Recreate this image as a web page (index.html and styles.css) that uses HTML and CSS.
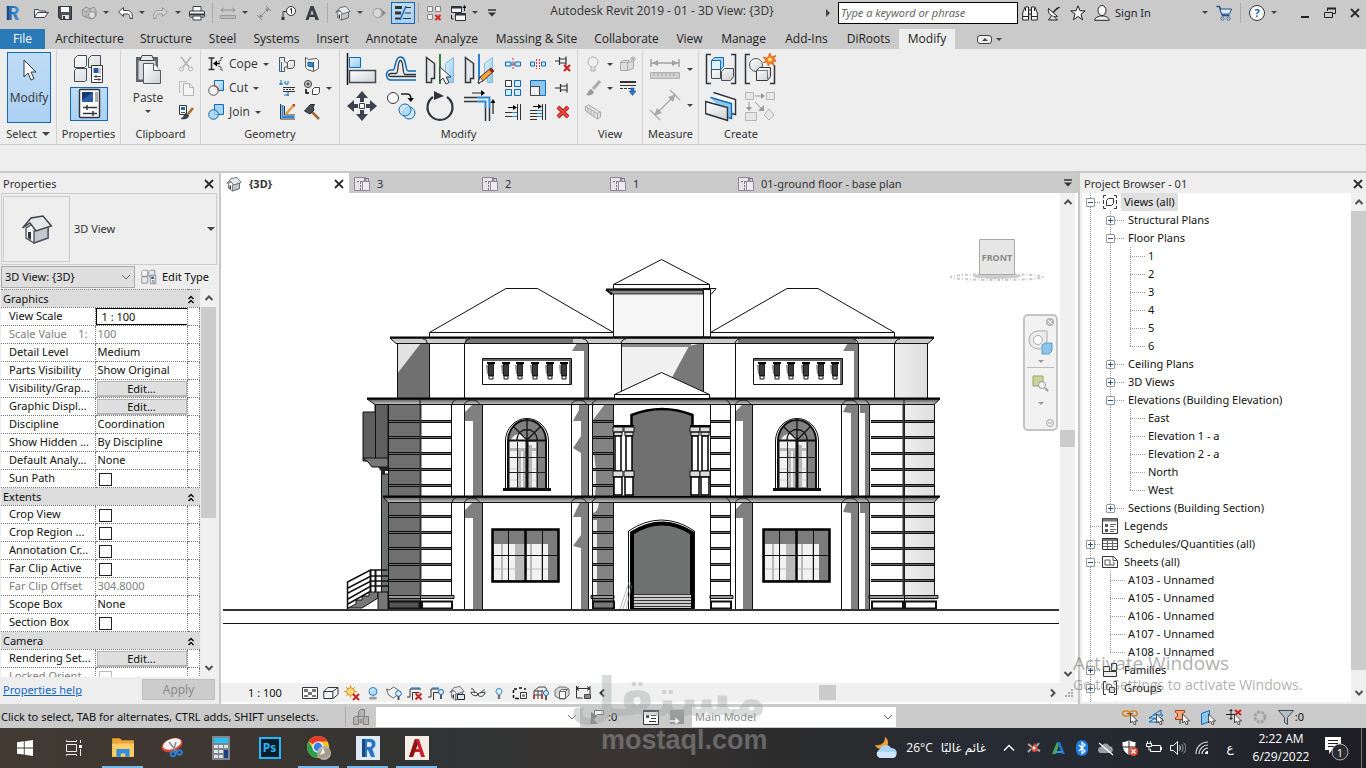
FILE: index.html
```html
<!DOCTYPE html>
<html lang="en">
<head>
    <meta charset="UTF-8">
    <meta name="viewport" content="width=device-width, initial-scale=1.0">
    <title>Autodesk Revit 2019 - 01 - 3D View: {3D}</title>
    <link rel="stylesheet" href="styles.css">
</head>
<body>
    <!-- Icon sprite -->
    <svg class="sprite" aria-hidden="true">
        <defs>
            <linearGradient id="g-r" x1="0" x2="1"><stop offset="0" stop-color="#1a5fa8"/><stop offset="1" stop-color="#4d9bdc"/></linearGradient>
            <linearGradient id="g-sky" x1="0" x2="1" y1="0" y2="1"><stop offset="0" stop-color="#e6f4fc"/><stop offset="1" stop-color="#8cc8ee"/></linearGradient>
            <linearGradient id="g-grey" x1="0" x2="1" y1="0" y2="1"><stop offset="0" stop-color="#fff"/><stop offset="1" stop-color="#cdd0d4"/></linearGradient>
        </defs>

        <!-- title bar -->
        <symbol id="i-revit" viewBox="0 0 16 18"><path d="M1 1h3v16H1z" fill="#174a86"/><path d="M4 1h5c4 0 5.500 2 5.500 4.500 0 2-1 3.500-3 4.200L15 17h-4L8 10.500H6.500V17H4zM6.500 3.500v4.500H9c1.500 0 2.200-1 2.200-2.300S10.500 3.500 9 3.500z" fill="url(#g-r)" fill-rule="evenodd"/></symbol>
        <symbol id="i-open" viewBox="0 0 16 16"><path d="M1.500 12.500v-8h4l1 1.500h6v2" fill="#fff" stroke="#3d434c"/><path d="M1.500 12.500l3-5h11l-4 5z" fill="#f4f4f4" stroke="#3d434c"/></symbol>
        <symbol id="i-save" viewBox="0 0 16 16"><path d="M1.500 1.500h13v13h-11l-2-2z" fill="#4b5058" stroke="#30353d"/><path d="M4 2h8v5H4z" fill="#fff"/><path d="M5 10h7v4H5z" fill="#e2e2e2"/><path d="M6 11h2v3H6z" fill="#333"/></symbol>
        <symbol id="i-sync" viewBox="0 0 16 16"><path d="M1 5l4-3 4 2 4-2 2 3v6l-4 3-4-1-5-2z" fill="#c4c4c4" stroke="#8f8f8f"/><path d="M1 5l4 2v5M5 7l4-3v5l-4 3" fill="none" stroke="#999"/><circle cx="11" cy="10" r="3.500" fill="#ddd" stroke="#8a8a8a"/></symbol>
        <symbol id="i-undo" viewBox="0 0 16 16"><path d="M6.500 2.500l-5 4.500 5 4.500V9h4c2 0 2.500 2 2.500 4.500h2.500C15.500 8 14 5.500 10.500 5.500h-4z" fill="#fff" stroke="#3d434c"/></symbol>
        <symbol id="i-redo" viewBox="0 0 16 16"><path d="M9.500 2.500l5 4.500-5 4.500V9h-4c-2 0-2.500 2-2.500 4.500H.5C.5 8 2 5.500 5.500 5.500h4z" fill="#d4d4d4" stroke="#999"/></symbol>
        <symbol id="i-print" viewBox="0 0 16 16"><path d="M4 6V1.500h8V6" fill="#fff" stroke="#3d434c"/><rect x=".5" y="6" width="15" height="6" rx="1" fill="#f4f4f4" stroke="#30353d"/><path d="M1 9.500h14" stroke="#30353d" stroke-width="2"/><path d="M4 11h8v4H4z" fill="#fff" stroke="#3d434c"/></symbol>
        <symbol id="i-ruler" viewBox="0 0 16 16"><path d="M1 5h14M3.500 3L1 5l2.500 2M12.500 3L15 5l-2.500 2" fill="none" stroke="#8c8c8c"/><path d="M.5 10.500h15v3H.5z" fill="#bbb" stroke="#999"/></symbol>
        <symbol id="i-dim" viewBox="0 0 16 16"><path d="M3 13L13 3M1 10l5 5M10 1l5 5" fill="none" stroke="#8c8c8c"/><path d="M3 13l1-4 3 3zM13 3l-4 1 3 3z" fill="#8c8c8c"/></symbol>
        <symbol id="i-tag" viewBox="0 0 16 16"><circle cx="11" cy="6" r="4.500" fill="#fff" stroke="#30353d"/><path d="M11.500 3.500v5M10 4.500l1.500-1" stroke="#222"/><path d="M6.500 6.500H3v6" fill="none" stroke="#30353d"/><path d="M1.500 12h3v3h-3z" fill="#30353d"/></symbol>
        <symbol id="i-text" viewBox="0 0 16 16"><path d="M6.500 1h3L15 15h-3.500l-1-3h-5l-1 3H1.500zM8 5l-1.700 4.500h3.400z" fill="#3a3f47" fill-rule="evenodd"/></symbol>
        <symbol id="i-home" viewBox="0 0 16 16"><path d="M2.500 7.500v5l4 2.500 7-2.500v-6L10 3z" fill="#fafafa" stroke="#50565f" stroke-width=".7"/><path d="M6.500 15V9l7-3v6.500z" fill="#c3c8cc" stroke="#50565f" stroke-width=".7"/><path d="M.8 7.500L5 2.500l6-1 4.200 5-7.700 2.500L4.500 5z" fill="#e6e7e9" stroke="#3d434c" stroke-width=".7"/><path d="M3.500 9.500h1.500v4l-1.500-1z" fill="#333"/></symbol>
        <symbol id="i-section" viewBox="0 0 16 16"><path d="M9 3l6 5-6 5z" fill="#8a8a8a"/><circle cx="6.500" cy="8" r="4.500" fill="#d8d8d8" stroke="#999"/></symbol>
        <symbol id="i-thin" viewBox="0 0 16 16"><path d="M0 2.500h7M0 8h6" stroke="#333" stroke-width="3"/><path d="M0 13.500h5" stroke="#333" stroke-width="2"/><path d="M5 15L11 1" stroke="#1567b5" stroke-width="1.500"/><path d="M11 2.500h5M10 8h6M8 13.500h8" stroke="#333"/></symbol>
        <symbol id="i-closewin" viewBox="0 0 16 16"><path d="M1.500 1.500h5v5h-5zM9.500 1.500h5v5h-5zM1.500 9.500h5v5h-5z" fill="#eee" stroke="#888"/><path d="M9.500 10l5 5m0-5l-5 5" stroke="#d22" stroke-width="2"/></symbol>
        <symbol id="i-switch" viewBox="0 0 16 16"><path d="M1.500 1.500h10v6h-10zM5.500 8.500h10v7h-10z" fill="#f4f4f4" stroke="#30353d"/><path d="M1 2.500h11M5 9.500h11" stroke="#30353d" stroke-width="2"/><path d="M14.500 2v4M1.500 10v4h2" fill="none" stroke="#222"/><path d="M14.500 0l2 3h-4z"/></symbol>
        <symbol id="i-custom" viewBox="0 0 12 8"><path d="M2 1h8" stroke="#333" stroke-width="1.500"/><path d="M2 3.500h8l-4 4z" fill="#333"/></symbol>
        <symbol id="i-binoc" viewBox="0 0 16 16"><path d="M.7 15V8L3 2h3.500v13zM15.300 15V8L13 2H9.500v13z" fill="#fff" stroke="#222"/><path d="M6.500 5h3v4h-3z" fill="#ddd" stroke="#222"/><path d="M1 11.500h5.500M9.500 11.500H15M3.500 3v3M12.500 3v3" stroke="#222"/></symbol>
        <symbol id="i-dish" viewBox="0 0 16 16"><path d="M2.500 3.500c-1 5 3 9 9 8z" fill="#fff" stroke="#222"/><path d="M7 7.500l4.500-4.500M9.500 5l4-3" fill="none" stroke="#222" stroke-width="1.500"/><path d="M5.500 11l-3 4h9l-3-3" fill="#ddd" stroke="#222"/></symbol>
        <symbol id="i-star" viewBox="0 0 16 16"><path d="M8 .8l2 5h5.200L11 9.200l1.600 5.600L8 11.500l-4.600 3.300L5 9.200.8 5.800H6z" fill="#f6f6f6" stroke="#222"/></symbol>
        <symbol id="i-user" viewBox="0 0 16 16"><ellipse cx="8" cy="5.500" rx="4" ry="5" fill="#fff" stroke="#222"/><path d="M.7 15.300c0-3 3-3.300 5.300-4.300h4c2.300 1 5.300 1.300 5.300 4.300z" fill="#eee" stroke="#222"/></symbol>
        <symbol id="i-cart" viewBox="0 0 16 16"><path d="M.5 1.500h3l3 9h7" fill="none" stroke="#1f4f85" stroke-width="1.500"/><path d="M4 4h11.500l-2 5H5.500z" fill="#dde9f5" stroke="#1f4f85"/><circle cx="6.500" cy="13.500" r="1.500" fill="#fff" stroke="#1f4f85"/><circle cx="12.500" cy="13.500" r="1.500" fill="#fff" stroke="#1f4f85"/></symbol>
        <symbol id="i-min" viewBox="0 0 12 12"><path d="M2 10h8" stroke="#222" stroke-width="2"/></symbol>
        <symbol id="i-restore" viewBox="0 0 12 12"><path d="M3.500 4V1.500h8v5H9" fill="none" stroke="#222"/><path d="M3 1.500h9" stroke="#222" stroke-width="2"/><path d="M.5 5.500h8v5h-8z" fill="none" stroke="#222"/></symbol>
        <symbol id="i-x" viewBox="0 0 12 12"><path d="M2 2l8 8m0-8l-8 8" stroke="#2b2b2b" stroke-width="1.800"/></symbol>

        <!-- ribbon, large -->
        <symbol id="b-cursor" viewBox="0 0 16 24"><path d="M3 2v17l4-4 3 7 3-1.500-3-6.500h5z" fill="#fff" stroke="#30353d"/></symbol>
        <symbol id="b-types" viewBox="0 0 32 32"><path d="M1.500 5.500l3-3h9v10l-2 2h-10zM15.500 5.500l3-3h9v10l-2 2h-10zM1.500 17.500l2-2h10v12l-2 1h-10z" fill="url(#g-grey)" stroke="#444b55"/><path d="M18.500 12.500h11v17h-11z" fill="#fff" stroke="#30353d"/><path d="M20.500 15h5v5h-5z" fill="#2457a4"/><path d="M27 15v6" stroke="#888"/><path d="M21 23.500h7M21 26.500h7M23 22v3M26 25v3" stroke="#444"/></symbol>
        <symbol id="b-props" viewBox="0 0 32 32"><rect x="6.500" y="1.500" width="20" height="28" rx="1" fill="#fff" stroke="#30353d" stroke-width="1.500"/><path d="M9 4h11v10H9z" fill="#2c5ea8"/><path d="M9 4h11l-11 8z" fill="#16386f"/><path d="M22 4h3v10h-3z" fill="#a9adb3"/><path d="M10 19.500h14M10 25.500h14M14 17v5M20 23v5" stroke="#30353d" stroke-width="1.500"/></symbol>
        <symbol id="b-paste" viewBox="0 0 32 32"><path d="M4 3h22v25H4z" fill="#5d646d"/><path d="M6.500 6.500h17v19h-17z" fill="#d8dade"/><path d="M10 1.500h10l2 5H8z" fill="#e8e8e8" stroke="#444"/><path d="M11.500 9.500h10l7 7v13h-17z" fill="url(#g-grey)" stroke="#555b63"/><path d="M21.500 9.500v7h7" fill="#fff" stroke="#555b63"/></symbol>
        <symbol id="b-align" viewBox="0 0 32 32"><path d="M1.500 0v32" stroke="#111" stroke-width="1.500"/><path d="M3.500 4.500h11v10h-11z" fill="url(#g-sky)" stroke="#0d69ba"/><path d="M3.500 17.500h26v12h-26z" fill="url(#g-grey)" stroke="#444b55" stroke-width="1.500"/></symbol>
        <symbol id="b-offset" viewBox="0 0 32 32"><path d="M31 27H6c-6 0-6-10 0-10h2c3 0 1-13 7.500-13s4.500 14 7.500 14h8" fill="none" stroke="#0d69ba" stroke-width="1.500"/><path d="M31 23.500H6c-3 0-3-3 0-3h5c3 0 1-13 4.500-13s1.500 14 4.500 14h11" fill="none" stroke="#30353d" stroke-width="1.300"/></symbol>
        <symbol id="b-mirror" viewBox="0 0 32 32"><path d="M2.500 4.500l8 6v15h-3v4h-5z" fill="#e4e6e9" stroke="#30353d" stroke-width="1.500"/><path d="M29.500 4.500l-8 6v15h3v4h5z" fill="url(#g-sky)" stroke="#7fbbe3"/></symbol>
        <symbol id="b-mirror-pick" viewBox="0 0 32 32"><use href="#b-mirror"/><path d="M16 1v30" stroke="#36803a" stroke-width="2"/><path d="M16 14v14l3-3 3 6 3-1.500-3-5.500h5z" fill="#fff" stroke="#30353d"/></symbol>
        <symbol id="b-mirror-draw" viewBox="0 0 32 32"><use href="#b-mirror"/><path d="M16 1v30" stroke="#2680d8" stroke-width="2"/><path d="M15 30l2-6L28 15l3 3-11 10z" fill="#f5a544" stroke="#5a2c12"/><path d="M28 15l3 3-2 2-3-3z" fill="#a61e1e"/><path d="M15 30l2-6 3 4z" fill="#fff" stroke="#444"/></symbol>
        <symbol id="b-move" viewBox="0 0 32 32"><path d="M16 1l6 7h-4v4h-4V8h-4zM16 31l-6-7h4v-4h4v4h4zM1 16l7-6v4h4v4H8v4zM31 16l-7 6v-4h-4v-4h4v-4z" fill="#3b424d"/><path d="M13.500 13.500h5v5h-5z" fill="#fff" stroke="#3b424d"/></symbol>
        <symbol id="b-copy" viewBox="0 0 32 32"><circle cx="8" cy="8" r="5.500" fill="#fff" stroke="#30353d"/><path d="M16 4h6q4 0 4 5" fill="none" stroke="#222" stroke-width="1.500"/><path d="M22.500 8h6.500l-3.200 4z"/><circle cx="24" cy="23" r="6" fill="#d5ebf8" stroke="#0d69ba"/><circle cx="20" cy="20" r="6" fill="url(#g-sky)" fill-opacity=".8" stroke="#0d69ba"/></symbol>
        <symbol id="b-rotate" viewBox="0 0 32 32"><path d="M9 7a12.500 12.500 0 1 0 14 0" fill="none" stroke="#30353d" stroke-width="2.200"/><path d="M10 1l10 5-10 4z" fill="#30353d"/></symbol>
        <symbol id="b-trim" viewBox="0 0 32 32"><path d="M1 7.500h13M1 11.500h13M22.500 18v13M26.500 18v13" stroke="#30353d" stroke-width="1.500"/><path d="M14 7.500h12.500V18M14 11.500h8.500V18" fill="none" stroke="#2b8ad8" stroke-width="2"/><path d="M9 3h10M30 24V12" stroke="#222" stroke-width="1.200"/><path d="M18 0l4 3-4 3zM27.500 13l2.500-4 2.500 4z"/></symbol>
        <symbol id="b-measure" viewBox="0 0 32 32"><path d="M2 10h28M2 6v8M30 6v8" stroke="#a2a2a2" stroke-width="1.500"/><path d="M3 10l6-3v6zM29 10l-6-3v6z" fill="#a2a2a2"/><path d="M1.500 19.500h29v6h-29z" fill="#cfcfcf" stroke="#b0b0b0"/><path d="M5 20v3M9 20v3M13 20v3M17 20v3M21 20v3M25 20v3" stroke="#aaa"/></symbol>
        <symbol id="b-dim" viewBox="0 0 32 32"><path d="M6 26L26 6M1 21l10 10M21 1l10 10" stroke="#a8a8a8" stroke-width="1.200"/><path d="M5 27l3-8 5 5zM27 5l-8 3 5 5z" fill="#a8a8a8"/></symbol>
        <symbol id="b-group" viewBox="0 0 32 32"><path d="M6 1.500H1.500v29H6M26 1.500h4.500v29H26" fill="none" stroke="#30353d" stroke-width="1.500"/><path d="M6.500 7.500l3-3h9v9l-3 3h-9z" fill="#a6d3f0" stroke="#0d69ba"/><path d="M6.500 7.500h9v9h-9z" fill="#e3f2fb" stroke="#0d69ba"/><path d="M6.500 16.500h9v9h-9zM16.500 18.500l3-3h9v8l-3 4h-9z" fill="url(#g-grey)" stroke="#444b55"/></symbol>
        <symbol id="b-similar" viewBox="0 0 32 32"><path d="M6 1.500H1.500v29H6M26 30.500h4.500V12" fill="none" stroke="#30353d" stroke-width="1.500"/><circle cx="12" cy="12" r="6.500" fill="url(#g-grey)" stroke="#555"/><path d="M12.500 17.500l3-3h11v9l-3 4h-11z" fill="url(#g-grey)" stroke="#30353d"/><path d="M12.500 17.500h11v9" fill="none" stroke="#777"/><path d="M26 0l1.500 4L32 2.500 29.500 6 33 8l-4 .5 1 4-3.500-2.500L24 13l-.5-4-4 .5L22 7l-3-3 4.500 1z" fill="#f5821f" stroke="#d94d12" stroke-width=".7"/><circle cx="26" cy="6.500" r="2" fill="#ffe38a"/></symbol>
        <symbol id="b-assembly" viewBox="0 0 32 32"><path d="M8.500 2.500l22 7v15l-4-1" fill="#fff" stroke="#30353d" stroke-width="1.500"/><path d="M5.500 7.500l21 6v15l-3-1" fill="#8cc8ee" stroke="#0d69ba" stroke-width="1.500"/><path d="M.5 11.500l22 6v13l-22-7z" fill="url(#g-grey)" stroke="#30353d" stroke-width="1.500"/></symbol>
        <symbol id="b-parts" viewBox="0 0 32 32"><path d="M1.500 2.500h8v7h-8zM22.500 2.500h8v7h-8zM1.500 22.500h11v8h-11zM20 25l5-6 5 6-5 5z" fill="#e6e6e6" stroke="#b5b5b5"/><path d="M11 6h8M5 12v7M11 12l7 7" stroke="#999"/><path d="M17 3l4 3-4 3zM2 17h6l-3 4zM20 15v6h-6z" fill="#999"/></symbol>

        <!-- ribbon, small -->
        <symbol id="s-cut2" viewBox="0 0 16 16"><path d="M3 1l8 10M13 1L5 11" stroke="#b4b4b4" stroke-width="1.700"/><circle cx="3.500" cy="13" r="2" fill="none" stroke="#b4b4b4"/><circle cx="12.500" cy="13" r="2" fill="none" stroke="#b4b4b4"/></symbol>
        <symbol id="s-copy2" viewBox="0 0 16 16"><path d="M1.500 13V1.500H9" fill="none" stroke="#bdbdbd"/><path d="M5.500 3.500h6l4 4v8h-10z" fill="#f4f4f4" stroke="#b4b4b4"/><path d="M11.500 3.500v4h4" fill="none" stroke="#b4b4b4"/></symbol>
        <symbol id="s-match" viewBox="0 0 16 16"><path d="M1.500 1.500h7v9h-7z" fill="#fff" stroke="#30353d"/><path d="M3 3h4v3H3z" fill="#2b6cb0"/><path d="M3 8.500h4" stroke="#555"/><path d="M15 4l-5 6" stroke="#a96a28" stroke-width="2.500"/><path d="M3 14c3 0 2-4 5-5l3 2c0 4-5 5-8 4z" fill="#3c424b"/></symbol>
        <symbol id="s-cope" viewBox="0 0 16 16"><path d="M.5 2h6M.5 13.500h6M3.500 2v11.500" stroke="#333" stroke-width="1.500" fill="none"/><path d="M15 1.500h-2v3l-3 1M15 14h-2v-3l-3-1" fill="none" stroke="#555"/><path d="M7 7.500h5" stroke="#000" stroke-width="1.500"/><path d="M5 7.500l4-3v6z"/></symbol>
        <symbol id="s-cutgeo" viewBox="0 0 16 16"><path d="M6.500.5h9v10h-9z" fill="url(#g-sky)" stroke="#0d69ba"/><circle cx="5.500" cy="10.500" r="4.800" fill="#f2f2f2" stroke="#555"/><path d="M5.500 5.700a4.800 4.800 0 0 1 4.800 4.800" fill="none" stroke="#d33" stroke-width="1.300"/></symbol>
        <symbol id="s-join" viewBox="0 0 16 16"><path d="M6.500.5h9v10h-9z" fill="#a6d3f0" stroke="#0d69ba"/><circle cx="5.500" cy="10.500" r="4.800" fill="#a6d3f0" fill-opacity=".8" stroke="#0d69ba"/></symbol>
        <symbol id="s-wall" viewBox="0 0 16 16"><path d="M.5 1.500h5v4l3 2v3l-3 1v4h-5z" fill="#e8e8e8" stroke="#30353d" stroke-width=".8"/><path d="M8.500 6.500l2-2h5v6l-2 2h-5z" fill="url(#g-grey)" stroke="#30353d" stroke-width=".8"/><path d="M2.500 15v-9" fill="none" stroke="#0d69ba"/></symbol>
        <symbol id="s-opening" viewBox="0 0 16 16"><path d="M1.500 1.500l3 2 8-1 2 2v8l-5 3-6-2-2-2z" fill="#f4f4f4" stroke="#30353d" stroke-width=".8"/><path d="M9.500 6v9" stroke="#555"/><path d="M4 6l5 1v4l-5-1z" fill="#3a8fd6" stroke="#0d5aa0"/></symbol>
        <symbol id="s-beam" viewBox="0 0 16 16"><path d="M2 0v5M0 4h4M5 15h5M6 1v3h3V1M9 12v4" stroke="#0d69ba" fill="none"/><path d="M4 7.500h12M4 11.500h12" stroke="#333"/><path d="M4 9.500h12" stroke="#333" stroke-dasharray="2 1"/></symbol>
        <symbol id="s-demo" viewBox="0 0 16 16"><circle cx="4" cy="4" r="3.500" fill="#ddd" stroke="#333"/><path d="M2 4h4M4 2v4" stroke="#333"/><path d="M2 9v4h3" fill="none" stroke="#000" stroke-width="1.500"/><path d="M8.500 9.500l2-2h5v5l-2 2h-5z" fill="#fff" stroke="#444"/></symbol>
        <symbol id="s-profile" viewBox="0 0 16 16"><path d="M1.500 0v15H16M5.500 2v9H16" fill="none" stroke="#30353d"/><path d="M3.500 1v12h12" fill="none" stroke="#2b8ad8" stroke-width="2"/><path d="M7 10l8-9" stroke="#e39a3b" stroke-width="2.500"/><path d="M14 0l2 2" stroke="#b33" stroke-width="2"/></symbol>
        <symbol id="s-hammer" viewBox="0 0 16 16"><path d="M6 6l9 9" stroke="#9b6a36" stroke-width="2.500"/><path d="M.5 7l6-6.500h4L9 3l1 3-4 4z" fill="#4a4f57" stroke="#22262c"/></symbol>
        <symbol id="s-split" viewBox="0 0 16 16"><path d="M.5 6h5.500v4H.5zM10 6h5.500v4H10z" fill="#d5ebf8" stroke="#0d69ba"/><path d="M6 8h4" stroke="#0d69ba"/><path d="M8 2v12" stroke="#d33" stroke-dasharray="2 1"/></symbol>
        <symbol id="s-splitgap" viewBox="0 0 16 16"><path d="M.5 6h4v4h-4zM11.500 6h4v4h-4z" fill="#d5ebf8" stroke="#0d69ba"/><path d="M6.500 3v10M9.500 3v10" stroke="#d33" stroke-dasharray="2 1"/></symbol>
        <symbol id="s-pin" viewBox="0 0 16 16"><path d="M0 8h5M5.500 4v8M5.500 6h6M5.500 10h6M12 3.500v9" fill="none" stroke="#333" stroke-width="1.200"/></symbol>
        <symbol id="s-unpin" viewBox="0 0 16 16"><path d="M0 5h4M4.500 1v8M4.500 3h6M4.500 7h6M11 .5v9" fill="none" stroke="#333" stroke-width="1.200"/><path d="M9 9l6 6m0-6l-6 6" stroke="#c22" stroke-width="2.200"/></symbol>
        <symbol id="s-array" viewBox="0 0 16 16"><path d="M.5.5h6v6h-6z" fill="#fff" stroke="#333"/><path d="M9.500.5h6v6h-6zM.5 9.500h6v6h-6zM9.500 9.500h6v6h-6z" fill="#d5ebf8" stroke="#0d69ba"/></symbol>
        <symbol id="s-scale" viewBox="0 0 16 16"><path d="M.5.5h15v15H.5z" fill="#8cc8ee" stroke="#0d69ba"/><path d="M.5 6.500h9v9h-9z" fill="#f2f2f2" stroke="#444"/></symbol>
        <symbol id="s-trim1" viewBox="0 0 16 16"><path d="M0 8.500h7M0 12.500h7M12.500 0v16M15.500 0v16" stroke="#333"/><path d="M7 8.500h5M7 12.500h5" stroke="#2b8ad8"/><path d="M3 3.500h6" stroke="#000"/><path d="M8 1l4 2.500L8 6z"/></symbol>
        <symbol id="s-trim2" viewBox="0 0 16 16"><path d="M0 6.500h7M0 9.500h7M0 12.500h7M0 15.500h7M12.500 0v16M15.500 0v16" stroke="#333"/><path d="M7 6.500h5M7 9.500h5M7 12.500h5" stroke="#2b8ad8"/><path d="M3 2.500h6" stroke="#000"/><path d="M8 0l4 2.500L8 5z"/></symbol>
        <symbol id="s-delete" viewBox="0 0 16 16"><path d="M3 3l10 10m0-10L3 13" stroke="#a51c1c" stroke-width="4"/><path d="M3 3l10 10m0-10L3 13" stroke="#e5443c" stroke-width="2.500"/></symbol>
        <symbol id="s-bulb" viewBox="0 0 16 16"><circle cx="8" cy="6" r="5" fill="#efefef" stroke="#b0b0b0"/><path d="M6 10v5h4v-5" fill="#ddd" stroke="#b0b0b0"/></symbol>
        <symbol id="s-hidebox" viewBox="0 0 16 16"><path d="M.5 6.500l3-2h6l-2 2zM.5 6.500h7v8h-7zM7.500 6.500l6-1v7l-6 2z" fill="#ddd" stroke="#aaa"/><path d="M13 0v6M10 3h6M11 1l4 4m0-4l-4 4" stroke="#aaa"/></symbol>
        <symbol id="s-brush" viewBox="0 0 16 16"><path d="M15 1L8 9" stroke="#aaa" stroke-width="3"/><path d="M1 15c2-1 2-5 5-6l3 3c-1 3-5 4-8 3z" fill="#999"/></symbol>
        <symbol id="s-lines" viewBox="0 0 16 16"><path d="M0 2h16" stroke="#333" stroke-width="2"/><path d="M0 5.500h16" stroke="#333"/><path d="M0 8.500h11" stroke="#333" stroke-dasharray="3 1"/><path d="M11 8h3v3h2l-3.500 4.500L9 11h2z" fill="#2b6fd0" stroke="#12478f" stroke-width=".5"/></symbol>
        <symbol id="s-slab" viewBox="0 0 16 16"><path d="M.5 2.500l3-1.500 12 7v5l-3 2-12-8z" fill="#e4e4e4" stroke="#aaa"/><path d="M.5 2.500l12 7v5M12.500 9.500l3-1.500M3 4v5M6 6v5M9 8v5" fill="none" stroke="#aaa"/></symbol>

        <!-- view bar -->
        <symbol id="v-detail" viewBox="0 0 16 16"><path d="M.5 2.500h15v11H.5z" fill="#fff" stroke="#30353d"/><path d="M2 4h4v3H2zM10 4h4v3h-4zM6 7h4v3H6zM2 10h4v2H2zM10 10h4v2h-4z" fill="#777"/></symbol>
        <symbol id="v-box" viewBox="0 0 16 16"><path d="M.8 6.500h9v7h-9zM.8 6.500l4-4H15v7l-5 4M9.800 6.500L15 2.500" fill="#f4f4f4" stroke="#30353d"/></symbol>
        <symbol id="v-sun" viewBox="0 0 16 16"><path d="M6.500 0v13M0 6.500h13M2 2l9 9m0-9l-9 9" stroke="#e9982c"/><circle cx="6.500" cy="6.500" r="3.800" fill="#ffdf7d" stroke="#e48a19"/><path d="M9 9l6 6m0-6l-6 6" stroke="#c22" stroke-width="2"/></symbol>
        <symbol id="v-shadow" viewBox="0 0 16 16"><ellipse cx="8" cy="13" rx="4" ry="1.500" fill="#9a9a9a"/><circle cx="8" cy="6.500" r="4" fill="url(#g-sky)" stroke="#2b7fc4"/></symbol>
        <symbol id="v-render" viewBox="0 0 16 16"><path d="M.5 4l3 1 4-3 5 3v4l-5 4-5-3z" fill="#f4f4f4" stroke="#444" stroke-width=".8"/><circle cx="12.500" cy="8.500" r="2.800" fill="#e3f2fb" stroke="#0d69ba"/><path d="M12.500 11v4" stroke="#555" stroke-width="2"/></symbol>
        <symbol id="v-crop" viewBox="0 0 16 16"><path d="M0 12h3V4h11M5.500 15V7.500h7" fill="none" stroke="#333"/><path d="M4 3h9" stroke="#0d69ba"/><path d="M8.500 8.500l6 6m0-6l-6 6" stroke="#c22" stroke-width="2"/></symbol>
        <symbol id="v-cropshow" viewBox="0 0 16 16"><path d="M0 12h3V4h8M5.500 15V7.500h5" fill="none" stroke="#333"/><path d="M4 3h7" stroke="#0d69ba"/><circle cx="13" cy="7" r="2.500" fill="#e3f2fb" stroke="#0d69ba"/><path d="M13 10v4" stroke="#555" stroke-width="2"/></symbol>
        <symbol id="v-lock" viewBox="0 0 16 16"><use href="#i-home"/><path d="M8.500 9.500h7v5h-7z" fill="#d5ebf8" stroke="#222"/></symbol>
        <symbol id="v-glasses" viewBox="0 0 16 16"><path d="M1 4c3-1 3 2 4 5M10 8c2-1 4-4 5-3" fill="none" stroke="#333"/><path d="M1 7c0 4 7 5 7 2-2-3-6-1-7-2zM8 9c0 4 7 3 7-2-2 1-5 0-7 2z" fill="#e8f2f8" stroke="#333"/></symbol>
        <symbol id="v-bulb" viewBox="0 0 16 16"><circle cx="8" cy="6.500" r="3" fill="#e3f2fb" stroke="#2b8ad8"/><path d="M8 10v4" stroke="#777" stroke-width="2.500"/></symbol>
        <symbol id="v-temp" viewBox="0 0 16 16"><path d="M2 4h3M7 3h3M12 4h2M1.500 5v3M1.500 10v3M3 13.500h4" stroke="#111" stroke-width="1.500" fill="none"/><path d="M8.500 7.500h6v6h-6z" fill="#fff" stroke="#333"/><circle cx="11.500" cy="10.500" r="1.500" fill="#777"/></symbol>
        <symbol id="v-analytic" viewBox="0 0 16 16"><path d="M1 6l5-4h6l2 3M1 6v8M1 10h9M5 5v9M9 5v9M1 6h9" fill="none" stroke="#444"/><path d="M1 10v4M9 10v4" stroke="#c22" stroke-width="1.500"/><circle cx="13" cy="8" r="2.500" fill="#e3f2fb" stroke="#0d69ba"/><path d="M13 11v4" stroke="#555" stroke-width="2"/></symbol>
        <symbol id="v-displace" viewBox="0 0 16 16"><path d="M1 5l4-3h6l4 2v6l-4 4H6l-5-3z" fill="#d9d9d9" stroke="#555" stroke-width=".8"/><path d="M5.500 6.500h6v7h-6zM5.500 6.500l2-2h6l-2 2" fill="#fafafa" stroke="#444" stroke-width=".8"/></symbol>
        <symbol id="v-constraint" viewBox="0 0 16 16"><path d="M1.500 1v12h6M15 1v8M2 3.500h13" fill="none" stroke="#333"/><path d="M4 1.500l-3 2 3 2M12 1.500l3 2-3 2" fill="none" stroke="#333"/><path d="M9.500 9.500h6v4h-6z" fill="#888" stroke="#444"/></symbol>

        <!-- browser and status bar -->
        <symbol id="t-sheettab" viewBox="0 0 16 16"><path d="M.5 1.500h11v13H.5z" fill="#e4e4e8" stroke="#7d7480" stroke-width=".8"/><path d="M8.500 5.500h7v9h-7z" fill="#ececf0" stroke="#7d7480" stroke-width=".8"/><path d="M3 5.500h6M6.500 6v8" stroke="#7d7480" stroke-dasharray="2 1"/><path d="M10.500 5V2.500h4V5" fill="none" stroke="#7d7480"/></symbol>
        <symbol id="t-views" viewBox="0 0 16 16"><path d="M4 1.500H1.500V4M12 1.500h2.500V4M4 14.500H1.500V12M12 14.500h2.500V12M1.500 6v4M14.500 6v4" fill="none" stroke="#333"/><path d="M4.500 6.500l2-2h5v5l-2 2h-5z" fill="#fff" stroke="#333"/></symbol>
        <symbol id="t-legend" viewBox="0 0 16 16"><path d="M.5.500h15v15H.5z" fill="#fff" stroke="#333"/><path d="M1 2h14" stroke="#777" stroke-width="3"/><path d="M3 6h3v3H3zM3 11h3v3H3z" fill="#555"/><path d="M8 6.500h6M8 8.500h4M8 11.500h6M8 13.500h4" stroke="#666"/></symbol>
        <symbol id="t-sched" viewBox="0 0 16 16"><path d="M.5 2.500h15v11H.5z" fill="#fff" stroke="#333"/><path d="M1 4h14" stroke="#777" stroke-width="2"/><path d="M1 7.500h14M1 10.500h14M5.500 5v8M10.500 5v8" stroke="#666"/></symbol>
        <symbol id="t-sheets" viewBox="0 0 16 16"><path d="M.5 2.500h11l4 4v7H.5z" fill="#fff" stroke="#333"/><path d="M11 2.500v4h4M3 6h5v5H3zM8 11h4V8" fill="none" stroke="#555"/></symbol>
        <symbol id="t-family" viewBox="0 0 16 16"><path d="M1.500 4.500h6v5h-6zM9.500 1.500h5v7h-5zM1.500 9.500h13v5h-13z" fill="#eee" stroke="#333"/></symbol>
        <symbol id="t-groups" viewBox="0 0 16 16"><path d="M4 1.500H1.500v13H4M12 1.500h2.500v13H12" fill="none" stroke="#333"/><circle cx="7" cy="7" r="3" fill="#eee" stroke="#555"/><path d="M7.500 7.500h5v5h-5z" fill="#ddd" stroke="#444"/></symbol>
        <symbol id="t-link" viewBox="0 0 16 16"><path d="M1 15V8l5-3 4 2 5-3v11z" fill="#777" stroke="#222"/></symbol>
        <symbol id="k-workset" viewBox="0 0 16 16"><path d="M.5 8.500l2-1h3v8h-5zM5.500 2.500l2-2h4v7h-6zM10.500 8.500l2-1h3v8h-5z" fill="#b5b5b5" stroke="#808080"/><path d="M6.500 9.500h3v5h-3z" fill="#999"/></symbol>
        <symbol id="k-request" viewBox="0 0 16 16"><path d="M5.500 1.500h9v4h-6l-3 2z" fill="#f0f0f0" stroke="#777"/><path d="M1 15h8l-4-4 3-4-6-4v6z" fill="#888"/></symbol>
        <symbol id="k-list" viewBox="0 0 16 16"><path d="M.5 1.500h15v14H.5z" fill="#fff" stroke="#30353d"/><path d="M1 2.500h14" stroke="#30353d"/><path d="M3 6h3v3H3z" fill="#555"/><path d="M8 6.500h5M8 9.500h5M6 12.500h7" stroke="#30353d"/></symbol>
        <symbol id="k-option" viewBox="0 0 16 16"><path d="M1 1h14v14H1z" fill="#999"/><path d="M0 11h6V8l5 4-5 4v-3H0z" fill="#eee" stroke="#999" stroke-width=".5"/></symbol>
        <symbol id="k-ptr" viewBox="0 0 16 16"><path d="M8.500 5v9l2-2 2 4 1.500-1-1.500-3h3z" fill="#fff" stroke="#222" stroke-width=".8"/></symbol>
        <symbol id="k-sellink" viewBox="0 0 16 16"><rect x=".5" y="2" width="7" height="5" rx="2.500" fill="none" stroke="#d98520" stroke-width="1.500"/><rect x="8" y="2" width="7" height="5" rx="2.500" fill="none" stroke="#d98520" stroke-width="1.500"/><path d="M5 4.500h6" stroke="#8c5512"/><use href="#k-ptr"/></symbol>
        <symbol id="k-selunder" viewBox="0 0 16 16"><path d="M1 9l5-3h9l-3 3zM1 13l5-3h9l-4 3z" fill="#d5ebf8" stroke="#0d69ba"/><path d="M5 6l8-5v5" fill="none" stroke="#0d69ba"/><use href="#k-ptr"/></symbol>
        <symbol id="k-selpin" viewBox="0 0 16 16"><path d="M1.500 1.500h9v2l-2 1v3l2 1v2h-9v-2l2-1v-3l-2-1z" fill="#f0a77a" stroke="#b3351c"/><path d="M6 11v4" stroke="#333"/><use href="#k-ptr"/></symbol>
        <symbol id="k-selface" viewBox="0 0 16 16"><path d="M1.500 4.500l8-3v11l-8 3z" fill="#8cc8ee" stroke="#0d69ba"/><use href="#k-ptr"/></symbol>
        <symbol id="k-drag" viewBox="0 0 16 16"><path d="M5 0v11M0 5.500h10M3.500 1.500h3M3.500 9.500h3" stroke="#222"/><path d="M9 1l6 5m0-5L9 6" stroke="#c22" stroke-width="2"/><use href="#k-ptr"/></symbol>
        <symbol id="k-ring" viewBox="0 0 16 16"><circle cx="8" cy="8" r="5" fill="none" stroke="#a4a4a4" stroke-width="3" stroke-dasharray="3 1"/></symbol>
        <symbol id="k-filter" viewBox="0 0 16 16"><path d="M.5 1.500h15l-6 7v7l-3-2v-5z" fill="#b9bdc2" stroke="#444b55"/></symbol>

        <!-- chevrons -->
        <symbol id="c-up" viewBox="0 0 10 10"><path d="M1.500 7L5 3.500 8.500 7" fill="none" stroke="#505050" stroke-width="2"/></symbol>
        <symbol id="c-down" viewBox="0 0 10 10"><path d="M1.500 3L5 6.500 8.500 3" fill="none" stroke="#505050" stroke-width="2"/></symbol>
        <symbol id="c-left" viewBox="0 0 10 10"><path d="M7 1.500L3.500 5 7 8.500" fill="none" stroke="#333" stroke-width="2"/></symbol>
        <symbol id="c-right" viewBox="0 0 10 10"><path d="M3 1.500L6.500 5 3 8.500" fill="none" stroke="#505050" stroke-width="2"/></symbol>
        <symbol id="c-thin" viewBox="0 0 10 10"><path d="M1 3l4 4 4-4" fill="none" stroke="#666"/></symbol>
        <symbol id="c-fold" viewBox="0 0 10 10"><path d="M2.500 5L5 2.500 7.500 5M2.500 9L5 6.500 7.500 9" fill="none" stroke="#111" stroke-width="1.500"/></symbol>

        <!-- taskbar -->
        <symbol id="w-start" viewBox="0 0 16 16"><path d="M0 2.300L6.800 1.300v6.200H0zM7.700 1.200L16 0v7.500H7.700zM0 8.400h6.800v6.200L0 13.700zM7.700 8.400H16V16l-8.300-1.200z" fill="#fff"/></symbol>
        <symbol id="w-task" viewBox="0 0 16 16"><path d="M.5 4.500h10v7H.5zM.5 0v1.500h10V0M.5 16v-1.500h10V16M14.500 0v3M14.500 9v7" fill="none" stroke="#eee"/><path d="M13 5h3v3h-3z" fill="#eee"/></symbol>
        <symbol id="w-folder" viewBox="0 0 22 20"><path d="M1 1h7l2 2h11v15H1z" fill="#e9a33a"/><path d="M1 6h20v12H1z" fill="#ffcf66"/><path d="M5 18v-7h12v7h-4v-3H9v3z" fill="#2f8ee0"/></symbol>
        <symbol id="w-snip" viewBox="0 0 24 22"><ellipse cx="12" cy="8" rx="11" ry="6.500" fill="#d9412c" transform="rotate(-20 12 8)"/><ellipse cx="12" cy="7" rx="9.500" ry="5" fill="#f4f4f4" transform="rotate(-20 12 7)"/><path d="M9 5l8 10M16 5l-3 10" stroke="#888" stroke-width="1.500"/><circle cx="13" cy="17" r="2.300" fill="none" stroke="#2d7dd2" stroke-width="2"/><circle cx="19.500" cy="15.500" r="2.300" fill="none" stroke="#2d7dd2" stroke-width="2"/></symbol>
        <symbol id="w-calc" viewBox="0 0 18 24"><path d="M0 0h18v24H0z" fill="#7f868c"/><path d="M2 2h14v5H2z" fill="#2cbdf2"/><path d="M2 9h4v3H2zM7 9h4v3H7zM12 9h4v3h-4zM2 14h4v3H2zM7 14h4v3H7zM2 19h4v3H2zM7 19h4v3H7z" fill="#dfe3e6"/><path d="M12 14h4v8h-4z" fill="#163f86"/></symbol>
        <symbol id="w-chrome" viewBox="0 0 24 24"><circle cx="11" cy="11" r="11" fill="#f7c325"/><path d="M11 11L1.500 5.500A11 11 0 0 1 20.500 5.500H11z" fill="#e5392c"/><path d="M11 11L6.500 13.500 1.500 5.500A11 11 0 0 0 10 22l4-6z" fill="#2c9f4b"/><circle cx="11" cy="11" r="5" fill="#3b7de0" stroke="#fff" stroke-width="1.200"/><circle cx="17" cy="17" r="7" fill="#a9b5bd"/><path d="M11 18c3-4 7-8 12-4v4c-2 4-9 5-11 3z" fill="#a99b82"/><path d="M16 11l2 6-5 2z" fill="#e8e8e8"/></symbol>
        <symbol id="w-revit" viewBox="0 0 24 24"><path d="M0 0h24v24H0z" fill="#dce9f5"/><path d="M6 3h3v18H6z" fill="#174a86"/><path d="M9 3h5c4 0 5.500 2.500 5.500 5 0 2.500-1.200 4-3.200 4.700L19 21h-4l-3-7h-1v7H9zM11 6v5h2.500c1.700 0 2.300-1 2.300-2.500S15 6 13.500 6z" fill="#2a73bd" fill-rule="evenodd"/></symbol>
        <symbol id="w-acad" viewBox="0 0 24 24"><path d="M0 0h24v24H0z" fill="#f6ece6"/><path d="M10 3h4l6 18h-4l-1.500-5h-5L8 21H4zM12 7l-1.700 6h3.400z" fill="#c4252b" fill-rule="evenodd"/><path d="M10 3L4 21h4l5-13z" fill="#8e1319"/></symbol>
        <symbol id="w-weather" viewBox="0 0 24 22"><path d="M11 0c4 2 5 10-2 12-4 .5-7-1-8-4 6 1 10-2 10-8z" fill="#f0a030"/><path d="M6 21a5 5 0 0 1 0-9c2-5 9-5 11-1 5 0 7 4 5 8-1 2-3 2-4 2z" fill="#a9d4f6"/><path d="M6 21a5 5 0 0 1-3-6h18c2 3 0 6-3 6z" fill="#cfe6fa"/></symbol>
        <symbol id="w-up" viewBox="0 0 16 16"><path d="M3 10.500l5-5 5 5" fill="none" stroke="#fff" stroke-width="1.300"/></symbol>
        <symbol id="w-app" viewBox="0 0 16 16"><path d="M2 4l4 3M13 3l-3 4M2 12l3-3M14 11l-4-2" stroke="#aaa" stroke-width="2"/><path d="M5 8l4-5 2 4 1 4-5 1z" fill="#e4503a"/><circle cx="8" cy="8" r="1.500" fill="#fff"/></symbol>
        <symbol id="w-adsk" viewBox="0 0 16 16"><path d="M2 14L7 2h3L6 14z" fill="#4ca64f"/><path d="M7 2h3l5 12h-3z" fill="#1f72d0"/><path d="M5 11h7v2H5z" fill="#28a3e0"/></symbol>
        <symbol id="w-bt" viewBox="0 0 14 16"><rect x="1" width="12" height="16" rx="6" fill="#1e7fe0"/><path d="M4 5l6 6-3 2.500v-11L10 5l-6 6" fill="none" stroke="#fff" stroke-width="1.200"/></symbol>
        <symbol id="w-cloud" viewBox="0 0 16 16"><path d="M3 13a3 3 0 0 1 0-6c1-4 7-5 8-1 5 0 5 7 1 7z" fill="#9a9fa5"/><path d="M1 3l14 12" stroke="#fff" stroke-width="1.200"/></symbol>
        <symbol id="w-shield" viewBox="0 0 16 16"><path d="M7 0c2 1.500 4 2 6.500 2 0 6-1 10-6.500 13C1.500 12 .5 8 .5 2 3 2 5 1.500 7 0z" fill="#fff"/><path d="M7 0v15M.5 7h13" stroke="#222"/><circle cx="11.500" cy="11.500" r="4.500" fill="#e14b35"/><path d="M9.500 9.500l4 4m0-4l-4 4" stroke="#fff" stroke-width="1.300"/></symbol>
        <symbol id="w-batt" viewBox="0 0 16 16"><path d="M6 5.500h8.500v6H4.500V9M15.500 7v3" fill="none" stroke="#fff"/><path d="M.5 3.500h5v3h-5zM1.500 1v2.500M4.500 1v2.500M3 6.500v4" fill="none" stroke="#fff"/></symbol>
        <symbol id="w-sound" viewBox="0 0 16 16"><path d="M.5 5.500h3l4-4v13l-4-4h-3z" fill="none" stroke="#fff"/><path d="M9.500 5.500c1 1 1 4 0 5" fill="none" stroke="#fff"/><path d="M11.500 4c2 2 2 6 0 8M13.500 2.500c3 3 3 8 0 11" fill="none" stroke="#999"/></symbol>
        <symbol id="w-wifi" viewBox="0 0 16 16"><path d="M2 14C2 7 7 2 14 2M5 14c0-5 4-9 9-9M8 14c0-3 3-6 6-6" fill="none" stroke="#ddd" stroke-width="1.200"/><path d="M11 14c0-2 1-3 3-3v3z" fill="#fff"/></symbol>
        <symbol id="w-note" viewBox="0 0 26 26"><path d="M1 2h16v13H8l-3 4v-4H1z" fill="#fff"/><path d="M4 5.500h10M4 8.500h10M4 11.500h7" stroke="#222"/><circle cx="16" cy="17" r="8" fill="#2a2c30" stroke="#aaa"/></symbol>
    </svg>

    <header class="titlebar">
        <div class="quick-access">
            <button class="tool logo" aria-label="Revit menu"><svg class="i16"><use href="#i-revit"/></svg></button>
            <button class="tool" aria-label="Open"><svg class="i16"><use href="#i-open"/></svg></button>
            <button class="tool" aria-label="Save"><svg class="i16"><use href="#i-save"/></svg></button>
            <button class="tool split" aria-label="Synchronize"><svg class="i16"><use href="#i-sync"/></svg><i class="caret"></i></button>
            <button class="tool split" aria-label="Undo"><svg class="i16"><use href="#i-undo"/></svg><i class="caret"></i></button>
            <button class="tool split" aria-label="Redo"><svg class="i16"><use href="#i-redo"/></svg><i class="caret"></i></button>
            <button class="tool" aria-label="Print"><svg class="i16"><use href="#i-print"/></svg></button>
            <span class="sep"></span>
            <button class="tool split" aria-label="Measure"><svg class="i16"><use href="#i-ruler"/></svg><i class="caret"></i></button>
            <button class="tool" aria-label="Aligned dimension"><svg class="i16"><use href="#i-dim"/></svg></button>
            <button class="tool" aria-label="Tag by category"><svg class="i16"><use href="#i-tag"/></svg></button>
            <button class="tool" aria-label="Text"><svg class="i16"><use href="#i-text"/></svg></button>
            <span class="sep"></span>
            <button class="tool split" aria-label="Default 3D view"><svg class="i16"><use href="#i-home"/></svg><i class="caret"></i></button>
            <button class="tool" aria-label="Section"><svg class="i16"><use href="#i-section"/></svg></button>
            <button class="tool pressed" aria-label="Thin lines"><svg class="i16"><use href="#i-thin"/></svg></button>
            <span class="sep"></span>
            <button class="tool" aria-label="Close inactive views"><svg class="i16"><use href="#i-closewin"/></svg></button>
            <button class="tool split" aria-label="Switch windows"><svg class="i16"><use href="#i-switch"/></svg><i class="caret"></i></button>
            <button class="tool" aria-label="Customize toolbar"><svg class="i8"><use href="#i-custom"/></svg></button>
        </div>
        <h1 class="app-title">Autodesk Revit 2019 - 01 - 3D View: {3D}</h1>
        <div class="info-center">
            <i class="caret side"></i>
            <input class="search" type="text" placeholder="Type a keyword or phrase" aria-label="Search">
            <button class="tool" aria-label="Find"><svg class="i16"><use href="#i-binoc"/></svg></button>
            <button class="tool" aria-label="Communication center"><svg class="i16"><use href="#i-dish"/></svg></button>
            <button class="tool" aria-label="Favorites"><svg class="i16"><use href="#i-star"/></svg></button>
            <button class="tool sign-in"><svg class="i16"><use href="#i-user"/></svg><span>Sign In</span><i class="caret"></i></button>
            <button class="tool" aria-label="App store"><svg class="i16"><use href="#i-cart"/></svg></button>
            <span class="sep"></span>
            <button class="tool split help" aria-label="Help"><span>?</span><i class="caret"></i></button>
        </div>
        <div class="window-buttons">
            <button class="tool" aria-label="Minimize"><svg class="i12"><use href="#i-min"/></svg></button>
            <button class="tool" aria-label="Restore"><svg class="i12"><use href="#i-restore"/></svg></button>
            <button class="tool" aria-label="Close"><svg class="i12"><use href="#i-x"/></svg></button>
        </div>
    </header>

    <nav class="ribbon-tabs">
        <button class="file">File</button>
        <button class="w-85">Architecture</button>
        <button class="w-68">Structure</button>
        <button class="w-45">Steel</button>
        <button class="w-63">Systems</button>
        <button class="w-49">Insert</button>
        <button class="w-69">Annotate</button>
        <button class="w-61">Analyze</button>
        <button class="w-99">Massing &amp; Site</button>
        <button class="w-81">Collaborate</button>
        <button class="w-45">View</button>
        <button class="w-63">Manage</button>
        <button class="w-63">Add-Ins</button>
        <button class="w-61">DiRoots</button>
        <button class="active">Modify</button>
        <button class="collapse" aria-label="Minimize ribbon"><span class="pill"><i class="caret up"></i></span><i class="caret"></i></button>
    </nav>

    <section class="ribbon">
        <div class="panel p-select">
            <div class="panel-body">
                <button class="big pressed"><svg class="cursor"><use href="#b-cursor"/></svg><span>Modify</span></button>
            </div>
            <button class="panel-name">Select <i class="caret wide"></i></button>
        </div>
        <div class="panel p-props">
            <div class="panel-body stack">
                <button class="tool" aria-label="Type properties"><svg class="i32"><use href="#b-types"/></svg></button>
                <button class="tool props-on pressed" aria-label="Properties"><svg class="i32"><use href="#b-props"/></svg></button>
            </div>
            <div class="panel-name">Properties</div>
        </div>
        <div class="panel p-clip">
            <div class="panel-body clip">
                <button class="big"><svg class="i32"><use href="#b-paste"/></svg><span>Paste</span><i class="caret"></i></button>
                <div class="smalls one">
                    <button class="tool" aria-label="Cut"><svg class="i16"><use href="#s-cut2"/></svg></button>
                    <button class="tool" aria-label="Copy"><svg class="i16"><use href="#s-copy2"/></svg></button>
                    <button class="tool" aria-label="Match type"><svg class="i16"><use href="#s-match"/></svg></button>
                </div>
            </div>
            <div class="panel-name">Clipboard</div>
        </div>
        <div class="panel p-geo">
            <div class="panel-body geo">
                <button class="tool named"><svg class="i16"><use href="#s-cope"/></svg>Cope<i class="caret"></i></button>
                <button class="tool" aria-label="Wall joins"><svg class="i16"><use href="#s-wall"/></svg></button>
                <button class="tool" aria-label="Split face"><svg class="i16"><use href="#s-opening"/></svg></button>
                <button class="tool named"><svg class="i16"><use href="#s-cutgeo"/></svg>Cut<i class="caret"></i></button>
                <button class="tool" aria-label="Beam joins"><svg class="i16"><use href="#s-beam"/></svg></button>
                <button class="tool split" aria-label="Paint"><svg class="i16"><use href="#s-demo"/></svg><i class="caret"></i></button>
                <button class="tool named"><svg class="i16"><use href="#s-join"/></svg>Join<i class="caret"></i></button>
                <button class="tool" aria-label="Edit profile"><svg class="i16"><use href="#s-profile"/></svg></button>
                <button class="tool" aria-label="Demolish"><svg class="i16"><use href="#s-hammer"/></svg></button>
            </div>
            <div class="panel-name">Geometry</div>
        </div>
        <div class="panel p-modify">
            <div class="panel-body modify">
                <div class="bigs">
                    <button class="tool" aria-label="Align"><svg class="i32"><use href="#b-align"/></svg></button>
                    <button class="tool" aria-label="Offset"><svg class="i32"><use href="#b-offset"/></svg></button>
                    <button class="tool" aria-label="Mirror, pick axis"><svg class="i32"><use href="#b-mirror-pick"/></svg></button>
                    <button class="tool" aria-label="Mirror, draw axis"><svg class="i32"><use href="#b-mirror-draw"/></svg></button>
                    <button class="tool" aria-label="Move"><svg class="i32"><use href="#b-move"/></svg></button>
                    <button class="tool" aria-label="Copy elements"><svg class="i32"><use href="#b-copy"/></svg></button>
                    <button class="tool" aria-label="Rotate"><svg class="i32"><use href="#b-rotate"/></svg></button>
                    <button class="tool" aria-label="Trim to corner"><svg class="i32"><use href="#b-trim"/></svg></button>
                </div>
                <div class="smalls three">
                    <button class="tool" aria-label="Split element"><svg class="i16"><use href="#s-split"/></svg></button>
                    <button class="tool" aria-label="Split with gap"><svg class="i16"><use href="#s-splitgap"/></svg></button>
                    <button class="tool" aria-label="Unpin"><svg class="i16"><use href="#s-unpin"/></svg></button>
                    <button class="tool" aria-label="Array"><svg class="i16"><use href="#s-array"/></svg></button>
                    <button class="tool" aria-label="Scale"><svg class="i16"><use href="#s-scale"/></svg></button>
                    <button class="tool" aria-label="Pin"><svg class="i16"><use href="#s-pin"/></svg></button>
                    <button class="tool" aria-label="Trim single"><svg class="i16"><use href="#s-trim1"/></svg></button>
                    <button class="tool" aria-label="Trim multiple"><svg class="i16"><use href="#s-trim2"/></svg></button>
                    <button class="tool" aria-label="Delete"><svg class="i16"><use href="#s-delete"/></svg></button>
                </div>
            </div>
            <div class="panel-name">Modify</div>
        </div>
        <div class="panel p-view">
            <div class="panel-body smalls view">
                <button class="tool split" aria-label="Hide"><svg class="i16"><use href="#s-bulb"/></svg><i class="caret"></i></button>
                <button class="tool" aria-label="Displace"><svg class="i16"><use href="#s-hidebox"/></svg></button>
                <button class="tool split" aria-label="Override graphics"><svg class="i16"><use href="#s-brush"/></svg><i class="caret"></i></button>
                <button class="tool" aria-label="Linework"><svg class="i16"><use href="#s-lines"/></svg></button>
                <button class="tool" aria-label="Selection box"><svg class="i16"><use href="#s-slab"/></svg></button>
            </div>
            <div class="panel-name">View</div>
        </div>
        <div class="panel p-measure">
            <div class="panel-body stack">
                <button class="tool split" aria-label="Measure between"><svg class="i32"><use href="#b-measure"/></svg><i class="caret"></i></button>
                <button class="tool split" aria-label="Dimension"><svg class="i32"><use href="#b-dim"/></svg><i class="caret"></i></button>
            </div>
            <div class="panel-name">Measure</div>
        </div>
        <div class="panel p-create">
            <div class="panel-body bigs two">
                <button class="tool" aria-label="Create group"><svg class="i32"><use href="#b-group"/></svg></button>
                <button class="tool" aria-label="Create similar"><svg class="i32"><use href="#b-similar"/></svg></button>
                <button class="tool" aria-label="Create assembly"><svg class="i32"><use href="#b-assembly"/></svg></button>
                <button class="tool" aria-label="Create parts"><svg class="i32"><use href="#b-parts"/></svg></button>
            </div>
            <div class="panel-name">Create</div>
        </div>
    </section>
    <div class="options-bar"></div>

    <main class="workspace">
        <aside class="properties">
            <div class="palette-title">
                <h2>Properties</h2>
                <button class="tool" aria-label="Close properties"><svg class="i12"><use href="#i-x"/></svg></button>
            </div>
            <button class="type-selector">
                <span class="thumb"><svg class="i32"><use href="#i-home"/></svg></span>
                <span>3D View</span>
                <i class="caret wide"></i>
            </button>
            <div class="instance-row">
                <div class="combo instance">
                    <select aria-label="Instance"><option>3D View: {3D}</option></select>
                    <svg class="i10"><use href="#c-thin"/></svg>
                </div>
                <button class="tool edit-type"><svg class="i16"><use href="#b-types"/></svg>Edit Type</button>
            </div>
            <div class="grid-wrap">
                <div class="grid-clip">
                    <table class="props">
                        <colgroup><col class="c-name"><col><col class="c-assoc"></colgroup>
                        <tbody>
                            <tr class="group"><th colspan="3"><span>Graphics<svg class="i10"><use href="#c-fold"/></svg></span></th></tr>
                            <tr><th>View Scale</th><td><input class="scale" type="text" value="1 : 100" aria-label="View Scale"></td><td></td></tr>
                            <tr class="off"><th>Scale Value &nbsp;&nbsp; 1:</th><td>100</td><td></td></tr>
                            <tr><th>Detail Level</th><td>Medium</td><td></td></tr>
                            <tr><th>Parts Visibility</th><td>Show Original</td><td></td></tr>
                            <tr><th>Visibility/Grap...</th><td><button class="edit">Edit...</button></td><td></td></tr>
                            <tr><th>Graphic Displ...</th><td><button class="edit">Edit...</button></td><td></td></tr>
                            <tr><th>Discipline</th><td>Coordination</td><td></td></tr>
                            <tr><th>Show Hidden ...</th><td>By Discipline</td><td></td></tr>
                            <tr><th>Default Analy...</th><td>None</td><td></td></tr>
                            <tr><th><label for="sun">Sun Path</label></th><td><input type="checkbox" id="sun"></td><td></td></tr>
                            <tr class="group"><th colspan="3"><span>Extents<svg class="i10"><use href="#c-fold"/></svg></span></th></tr>
                            <tr><th><label for="crop">Crop View</label></th><td><input type="checkbox" id="crop"></td><td></td></tr>
                            <tr><th><label for="region">Crop Region ...</label></th><td><input type="checkbox" id="region"></td><td></td></tr>
                            <tr><th><label for="annot">Annotation Cr...</label></th><td><input type="checkbox" id="annot"></td><td></td></tr>
                            <tr><th><label for="far">Far Clip Active</label></th><td><input type="checkbox" id="far"></td><td></td></tr>
                            <tr class="off"><th>Far Clip Offset</th><td>304.8000</td><td></td></tr>
                            <tr><th>Scope Box</th><td>None</td><td></td></tr>
                            <tr><th><label for="secbox">Section Box</label></th><td><input type="checkbox" id="secbox"></td><td></td></tr>
                            <tr class="group"><th colspan="3"><span>Camera<svg class="i10"><use href="#c-fold"/></svg></span></th></tr>
                            <tr><th>Rendering Set...</th><td><button class="edit">Edit...</button></td><td></td></tr>
                            <tr class="off"><th><label for="locked">Locked Orient...</label></th><td><input type="checkbox" id="locked" disabled></td><td></td></tr>
                        </tbody>
                    </table>
                </div>
                <div class="vscroll">
                    <svg class="i10"><use href="#c-up"/></svg>
                    <div class="track"><div class="thumb-v long"></div></div>
                    <svg class="i10"><use href="#c-down"/></svg>
                </div>
            </div>
            <div class="palette-foot">
                <a href="#">Properties help</a>
                <button disabled>Apply</button>
            </div>
        </aside>

        <section class="view-area">
            <div class="view-tabs">
                <button class="view-tab active"><svg class="i16"><use href="#i-home"/></svg><span>{3D}</span><svg class="i12"><use href="#i-x"/></svg></button>
                <button class="view-tab"><svg class="i16"><use href="#t-sheettab"/></svg><span>3</span></button>
                <button class="view-tab"><svg class="i16"><use href="#t-sheettab"/></svg><span>2</span></button>
                <button class="view-tab"><svg class="i16"><use href="#t-sheettab"/></svg><span>1</span></button>
                <button class="view-tab last"><svg class="i16"><use href="#t-sheettab"/></svg><span>01-ground floor - base plan</span></button>
                <button class="tool tab-list" aria-label="View list"><svg class="i8"><use href="#i-custom"/></svg></button>
            </div>
            <div class="viewport">
                <div class="canvas">
                    <!-- Front elevation, drawn in screen units -->
                    <svg class="model" viewBox="222 193 838 490" role="img" aria-label="Front elevation">
                        <defs>
                            <pattern id="upper" patternUnits="userSpaceOnUse" x="0" y="420" width="8" height="16"><path d="M0 .5h8M0 2.500h8" stroke="#111"/><path d="M0 1.500h8" stroke="#666"/></pattern>
                            <pattern id="lower" patternUnits="userSpaceOnUse" x="0" y="515" width="8" height="16"><path d="M0 .5h8M0 2.500h8" stroke="#111"/><path d="M0 1.500h8" stroke="#666"/></pattern>
                            <linearGradient id="side" x1="0" x2="1"><stop offset="0" stop-color="#eee"/><stop offset="1" stop-color="#dedede"/></linearGradient>
                            <linearGradient id="band" x1="0" x2="0" y1="0" y2="1"><stop offset="0" stop-color="#555"/><stop offset="1" stop-color="#ccc"/></linearGradient>
                            <g id="baluster"><path d="M0 0h8v2H0z"/><path d="M1 2h6v12H1z" fill="#222"/><path d="M3 3v10M5 3v10" stroke="#777" stroke-width=".6"/><path d="M2 14h4v3H2z" fill="#fff" stroke="#111"/><path d="M-1 3h2v9H0z" fill="#888"/></g>
                            <g id="balusters"><path d="M.5.500h89v26H.5z" fill="#fff" stroke="#111"/><path d="M1 2h88M88 1v25" stroke="#666" stroke-width="2"/>
                                <use href="#baluster" x="5" y="4"/><use href="#baluster" x="20" y="4"/><use href="#baluster" x="34" y="4"/><use href="#baluster" x="49" y="4"/><use href="#baluster" x="64" y="4"/><use href="#baluster" x="78" y="4"/></g>
                            <g id="arch-window">
                                <path d="M1.500 72V24a21 22 0 0 1 43 0v48" fill="#fff" stroke="#111"/>
                                <path d="M4 72V24a19 21 0 0 1 38 0v48z" fill="#808080" stroke="#111" stroke-width="2"/>
                                <path d="M6 25q3-8 9-8t9 8zM6 25h26v45H6z" fill="#f0f0f0"/>
                                <path d="M14 34h3v36h-3zM24 28h4v42h-4zM6 31h26v3H6zM19 34h3v36h-3z" fill="#b5b5b5"/>
                                <path d="M6 52h26M6 63h26" stroke="#ccc"/>
                                <path d="M4 23.500h38" stroke="#111" stroke-width="2"/>
                                <path d="M23 24v48" stroke="#111" stroke-width="3"/>
                                <path d="M4 40.500h38M4 55.500h38M13.500 25v46M33.500 25v46" stroke="#222"/>
                                <path d="M23 23V3M23 23L9 9M23 23L37 9M13 23c0-14 20-14 20 0" fill="none" stroke="#111" stroke-width="1.300"/>
                                <path d="M-1 71h48v3H-1z" fill="#111"/>
                            </g>
                            <g id="wide-window">
                                <path d="M1 1h67v53H1z" fill="#7c7c7c"/>
                                <path d="M3 16h54v36H3z" fill="#f2f2f2"/>
                                <path d="M24 16h9v36h-9zM10 16h2v36h-2zM39 16h2v36h-2zM50 16h2v36h-2z" fill="#b9b9b9"/>
                                <path d="M3 41h54" stroke="#bbb"/>
                                <path d="M1.500 1.500h66v52h-66z" fill="none" stroke="#000" stroke-width="2.500"/>
                                <path d="M34.500 2v51" stroke="#000" stroke-width="2.500"/>
                                <path d="M2 27.500h65M17.500 2v51M51.500 2v51" stroke="#111"/>
                            </g>
                            <g id="shadow-lane"><path d="M0 8l8-8h9v92H8V17H0z" fill="#808080"/></g>
                            <g id="column"><path d="M0 0h10v5H0zM1 5h8v4H1z" fill="#ddd" stroke="#111"/><path d="M2 9h6v35H2z" fill="#fff" stroke="#000" stroke-width="1.500"/><path d="M0 44h10v6H0z" fill="#ddd" stroke="#111"/><path d="M1 50h8v18H1z" fill="#fff" stroke="#000" stroke-width="1.500"/></g>
                        </defs>

                        <!-- roofs -->
                        <g fill="#fff" stroke="#111">
                            <path d="M429.500 337v-4.500l76.500-44h31.500l76 44v4.500M429.500 332.500h184"/>
                            <path d="M710.500 337v-4.500l76.500-44h31l76.500 44v4.500M710.500 332.500h184"/>
                            <path d="M613.500 289v-4.500l48-25 48 25v4.500zM613.500 284.500h96"/>
                        </g>
                        <!-- penthouse -->
                        <path d="M613.500 289.500h90V337h-90z" fill="#f6f6f6" stroke="#111"/>
                        <path d="M703.500 289.500h7V337h-7z" fill="#fff" stroke="#111"/>
                        <path d="M610 290h93v4h-91z" fill="#888" stroke="#111" stroke-width=".8"/>
                        <path d="M606 289.500h97M606 289.500l6 5" fill="none" stroke="#111" stroke-width="2"/>
                        <path d="M703 288.500h13l-5 6" fill="none" stroke="#111"/>

                        <!-- top floor -->
                        <path d="M397 343h530v55H397z" fill="#fff"/>
                        <path d="M397 343h33v55h-33z" fill="#707070"/>
                        <path d="M397 343h24l-24 31z" fill="#e2e2e2"/>
                        <path d="M895 343h32v55h-32z" fill="url(#side)"/>
                        <path d="M621 343h82v55h-82z" fill="#f0f0f0"/>
                        <path d="M703 343v55h-42l28-52z" fill="#787878"/>
                        <path d="M621 343h70v4h-70z" fill="#888"/>
                        <path d="M577 343h11v55h-4v-47h-12zM848 343h10v55h-4v-47h-11z" fill="#808080"/>
                        <path d="M397.500 343v55M429.500 343v55M464.500 343v55M588.500 343v55M621.500 343v55M703.500 343v55M735.500 343v55M858.500 343v55M894.500 343v55M927.500 343v55" stroke="#111"/>
                        <path d="M390 338h544l-6 5.500H396z" fill="#ccc" stroke="#111"/>
                        <path d="M465 339h108v4H465zM738 339h118v4H738z" fill="#777"/>
                        <path d="M390 337.500h544" stroke="#000" stroke-width="2"/>
                        <path d="M427 343c0-3-2-4-4-4M465 343c1-3 3-4 5-4M588 343c-1-3-3-4-5-4M621 343c1-3 3-4 5-4M735 343c1-3 3-4 5-4M858 343c-1-3-3-4-5-4M895 343c1-3 3-4 5-4" fill="none" stroke="#111"/>
                        <use href="#balusters" x="482" y="358"/>
                        <use href="#balusters" x="753" y="358"/>

                        <!-- balcony on the left side -->
                        <path d="M375 404h13v57h-25v-49h12z" fill="#5f5f5f" stroke="#111"/>
                        <path d="M375.500 404v54" stroke="#111"/>
                        <path d="M363 458h25v9h-16l-4-5z" fill="#777" stroke="#111"/>
                        <path d="M378 467h10v4h-3v6h-4v-6z" fill="#222"/>
                        <path d="M381.500 474h7v136h-7z" fill="#6c706e" stroke="#111"/>

                        <!-- middle floor -->
                        <path d="M388 404h547v92H388z" fill="#fff"/>
                        <path d="M388 404h33v92h-33z" fill="#6f6f6f"/>
                        <path d="M592 404h22v92h-22z" fill="#838383"/>
                        <path d="M593 404h12l-12 16zM592 446q6 20 3 50h-3z" fill="#f0f0f0"/>
                        <path d="M905 404h30v92h-30z" fill="url(#side)"/>
                        <use href="#shadow-lane" x="465" y="404"/>
                        <path d="M579 404h9v92h-7v-43l-8-5 8-12v-15h-8l6-11z" fill="#808080"/>
                        <use href="#shadow-lane" x="735" y="404"/>
                        <path d="M847 404h11v92h-7v-83l-8-1zM860 404h9v92h-4v-83h-5z" fill="#808080"/>
                        <path d="M388 420h32v76h-32zM421 420h30v76h-30zM593 420h21v76h-21zM710 420h21v76h-21zM871 420h32v76h-32zM905 420h29v76h-29z" fill="url(#upper)"/>

                        <!-- ground floor -->
                        <path d="M388 502h547v108H388z" fill="#fff"/>
                        <path d="M388 502h33v108h-33z" fill="#6f6f6f"/>
                        <path d="M592 502h22v108h-22z" fill="#838383"/>
                        <path d="M593 502h6q-1 10-6 11zM592 520h5v76h-5z" fill="#f0f0f0"/>
                        <path d="M905 502h30v108h-30z" fill="url(#side)"/>
                        <path d="M473 502h9v108h-9v-92h-8v-8zM743 502h9v108h-9v-92h-8v-8z" fill="#808080"/>
                        <path d="M580 502h8v108h-7v-62l-8-2 8-11v-18h-8zM847 502h11v108h-7v-97l-8-1zM860 502h9v108h-4v-97h-5z" fill="#808080"/>
                        <path d="M388 515h32v80h-32zM421 515h30v80h-30zM593 515h21v80h-21zM710 515h21v80h-21zM871 515h32v80h-32zM905 515h29v80h-29z" fill="url(#lower)"/>
                        <g stroke="#111">
                            <path d="M386 595.500h68v3h-68zM591 595.500h23v3h-23zM710 595.500h23v3h-23zM869 595.500h69v3h-69z" fill="#999"/>
                            <path d="M388.500 601.500h31v7h-31z" fill="#555" stroke-width="2"/>
                            <path d="M422 601.500h30v7h-30zM711 601.500h20v7h-20zM872 601.500h31v7h-31zM905 601.500h31v7h-31z" fill="#fff" stroke-width="2"/>
                            <path d="M593 601.500h21v7h-21z" fill="#777" stroke-width="2"/>
                        </g>

                        <!-- pilaster edges -->
                        <path d="M388.500 404v206M420.500 404v206M451.500 404v192M464.500 404v206M482.500 404v206M571.500 404v206M588.500 404v206M592.500 404v206M613.500 404v206M710.500 404v206M730.500 404v192M735.500 404v206M752.500 404v206M841.500 404v206M858.500 404v206M869.500 404v206M904.500 404v206M934.500 404v192" stroke="#111"/>
                        <path d="M420.500 404v192M903.500 404v192" stroke="#333" stroke-width="2"/>

                        <!-- floor bands -->
                        <path d="M383 497h556l-5 5.500H388z" fill="url(#band)" stroke="#111"/>
                        <path d="M383 496.500h557" stroke="#000" stroke-width="2"/>
                        <path d="M367 399h573l-6 5.500H375z" fill="url(#band)" stroke="#111"/>
                        <path d="M367 398.500h573" stroke="#000" stroke-width="2"/>
                        <g id="scrolls" fill="none" stroke="#111">
                            <path d="M452 404c1-3 3-5 7-5M464 405c2-4 5-5 8-5s6 1 8 5M571 405c2-4 5-5 8-5s6 1 8 5M592 404c2-3 4-5 7-5M730 404c-2-3-4-5-6-5M735 405c2-4 5-5 8-5s6 1 8 5M842 405c2-4 5-5 8-5s6 1 8 5M869 404c-2-3-4-5-6-5M904 404v-5M420 404v-5"/>
                        </g>
                        <use href="#scrolls" y="98"/>

                        <!-- entrance bay -->
                        <path d="M614.500 398v-3.500l47-22 48 22v3.500M614.500 394.500h95" fill="#fff" stroke="#111"/>
                        <path d="M631 496v-80q31-14 62 0v80z" fill="#707070"/>
                        <path d="M631.500 427v-12q30.500-12 61 0v12" fill="none" stroke="#000" stroke-width="2.500"/>
                        <path d="M613 425h21v2h-21zM690 425h21v2h-21z"/>
                        <use href="#column" x="613" y="427"/><use href="#column" x="624" y="427"/>
                        <use href="#column" x="690" y="427"/><use href="#column" x="700" y="427"/>
                        <path d="M628.500 610v-79q33-22 66 0v79" fill="#fff" stroke="#111"/>
                        <path d="M632 609v-76q30-19 60 0v76z" fill="#6f7170" stroke="#000" stroke-width="4"/>
                        <path d="M634 594h57v14h-57z" fill="#ccc"/>
                        <path d="M634 594.500h57M634 597.500h57M634 600.500h57M634 603.500h57M634 606.500h57" stroke="#333"/>
                        <path d="M620 609l9-27M623 609l8-27M626 609l6-24" stroke="#888" stroke-width=".6"/>

                        <use href="#arch-window" x="504" y="417"/>
                        <use href="#arch-window" x="774" y="417"/>
                        <use href="#wide-window" x="491" y="528"/>
                        <use href="#wide-window" x="762" y="528"/>

                        <!-- side stair -->
                        <path d="M348 608l8-4v-4h6v-4h7v-4h9v6l-16 10z" fill="#777" stroke="#111"/>
                        <path d="M378 592h10v18h-10z" fill="#777" stroke="#111"/>
                        <path d="M347.500 609v-27l23-12h17M348 588l23-12h17M348 593l23-12h17M348 599l23-13h17M348 604l23-13" fill="none" stroke="#111" stroke-width="1.500"/>
                        <path d="M370.500 570v22M375.500 570v22" stroke="#111" stroke-width="2"/>

                        <path d="M223 610h836" stroke="#333" stroke-width="2"/>
                        <path d="M223 623.500h836" stroke="#111"/>
                    </svg>

                    <svg class="viewcube" viewBox="0 0 98 46" aria-hidden="true">
                        <ellipse cx="49" cy="38" rx="46" ry="3" fill="none" stroke="#c9c9c9" stroke-width="2" stroke-dasharray="1 2 3 2"/>
                        <ellipse cx="49" cy="37" rx="24" ry="3" fill="#ccc"/>
                        <path d="M31.500.5h35v35h-35z" fill="#e6e6e6" stroke="#aaa"/>
                        <text x="49" y="22" text-anchor="middle" class="cube-face">FRONT</text>
                    </svg>

                    <div class="navbar">
                        <svg class="nav-dot"><circle cx="4" cy="4" r="4" fill="#b5b5b5"/><path d="M2 2l4 4m0-4L2 6" stroke="#fff"/></svg>
                        <svg class="nav-icon" viewBox="0 0 26 26"><path d="M1 10a9 9 0 0 1 9-9h9v9a9 9 0 1 1-18 0z" fill="#ececec" stroke="#aaa"/><circle cx="10" cy="10" r="4.500" fill="#fff" stroke="#aaa"/><path d="M14 15l3-2h7v8l-3 3h-7z" fill="#8fc4e8" stroke="#5c9fcb"/></svg>
                        <i class="caret dim"></i>
                        <hr>
                        <svg class="nav-icon" viewBox="0 0 26 26"><path d="M5 4h10v10H5z" fill="#cdd49a" stroke="#9aa36a"/><circle cx="14" cy="13" r="3.500" fill="#f2f2f2" stroke="#999"/><path d="M17 16l3 3" stroke="#999" stroke-width="2"/></svg>
                        <i class="caret dim"></i>
                        <svg class="nav-dot bottom"><circle cx="4" cy="4" r="3.500" fill="#eee" stroke="#aaa"/><path d="M2 4h4" stroke="#aaa"/></svg>
                    </div>
                </div>
                <div class="vscroll">
                    <svg class="i10"><use href="#c-up"/></svg>
                    <div class="track middle"><div class="thumb-v"></div></div>
                    <svg class="i10"><use href="#c-down"/></svg>
                </div>
            </div>
            <div class="view-bar">
                <button class="tool scale-label">1 : 100</button>
                <button class="tool" aria-label="Detail level"><svg class="i16"><use href="#v-detail"/></svg></button>
                <button class="tool" aria-label="Visual style"><svg class="i16"><use href="#v-box"/></svg></button>
                <button class="tool" aria-label="Sun path off"><svg class="i16"><use href="#v-sun"/></svg></button>
                <button class="tool" aria-label="Shadows"><svg class="i16"><use href="#v-shadow"/></svg></button>
                <button class="tool" aria-label="Rendering"><svg class="i16"><use href="#v-render"/></svg></button>
                <button class="tool" aria-label="Crop view"><svg class="i16"><use href="#v-crop"/></svg></button>
                <button class="tool" aria-label="Show crop region"><svg class="i16"><use href="#v-cropshow"/></svg></button>
                <button class="tool" aria-label="Lock 3D view"><svg class="i16"><use href="#v-lock"/></svg></button>
                <button class="tool" aria-label="Temporary hide"><svg class="i16"><use href="#v-glasses"/></svg></button>
                <button class="tool" aria-label="Reveal hidden"><svg class="i16"><use href="#v-bulb"/></svg></button>
                <button class="tool" aria-label="Temporary view properties"><svg class="i16"><use href="#v-temp"/></svg></button>
                <button class="tool" aria-label="Analytical model"><svg class="i16"><use href="#v-analytic"/></svg></button>
                <button class="tool" aria-label="Displacement sets"><svg class="i16"><use href="#v-displace"/></svg></button>
                <button class="tool" aria-label="Reveal constraints"><svg class="i16"><use href="#v-constraint"/></svg></button>
                <div class="hscroll">
                    <svg class="i10"><use href="#c-left"/></svg>
                    <div class="track"><div class="thumb-h"></div></div>
                    <svg class="i10"><use href="#c-right"/></svg>
                </div>
                <svg class="grip"><path d="M8 1h2M5 4h2M8 4h2M2 7h2M5 7h2M8 7h2" stroke="#aaa" stroke-width="2"/></svg>
            </div>
        </section>

        <aside class="browser">
            <div class="palette-title">
                <h2>Project Browser - 01</h2>
                <button class="tool" aria-label="Close browser"><svg class="i12"><use href="#i-x"/></svg></button>
            </div>
            <div class="tree-wrap">
                <ul class="tree">
                    <li><div class="node"><button class="exp minus" aria-label="Collapse"></button><i class="stub"></i><svg class="i16"><use href="#t-views"/></svg><span class="label selected">Views (all)</span></div>
                        <ul>
                            <li><div class="node"><button class="exp" aria-label="Expand"></button><i class="stub"></i>Structural Plans</div></li>
                            <li><div class="node"><button class="exp minus" aria-label="Collapse"></button><i class="stub"></i>Floor Plans</div>
                                <ul>
                                    <li class="leaf"><i class="stub"></i>1</li>
                                    <li class="leaf"><i class="stub"></i>2</li>
                                    <li class="leaf"><i class="stub"></i>3</li>
                                    <li class="leaf"><i class="stub"></i>4</li>
                                    <li class="leaf"><i class="stub"></i>5</li>
                                    <li class="leaf"><i class="stub"></i>6</li>
                                </ul>
                            </li>
                            <li><div class="node"><button class="exp" aria-label="Expand"></button><i class="stub"></i>Ceiling Plans</div></li>
                            <li><div class="node"><button class="exp" aria-label="Expand"></button><i class="stub"></i>3D Views</div></li>
                            <li><div class="node"><button class="exp minus" aria-label="Collapse"></button><i class="stub"></i>Elevations (Building Elevation)</div>
                                <ul>
                                    <li class="leaf"><i class="stub"></i>East</li>
                                    <li class="leaf"><i class="stub"></i>Elevation 1 - a</li>
                                    <li class="leaf"><i class="stub"></i>Elevation 2 - a</li>
                                    <li class="leaf"><i class="stub"></i>North</li>
                                    <li class="leaf"><i class="stub"></i>West</li>
                                </ul>
                            </li>
                            <li><div class="node"><button class="exp" aria-label="Expand"></button><i class="stub"></i>Sections (Building Section)</div></li>
                        </ul>
                    </li>
                    <li><div class="node plain"><i class="stub"></i><svg class="i16"><use href="#t-legend"/></svg><span class="label">Legends</span></div></li>
                    <li><div class="node"><button class="exp" aria-label="Expand"></button><i class="stub"></i><svg class="i16"><use href="#t-sched"/></svg><span class="label">Schedules/Quantities (all)</span></div></li>
                    <li><div class="node"><button class="exp minus" aria-label="Collapse"></button><i class="stub"></i><svg class="i16"><use href="#t-sheets"/></svg><span class="label">Sheets (all)</span></div>
                        <ul>
                            <li class="leaf"><i class="stub"></i>A103 - Unnamed</li>
                            <li class="leaf"><i class="stub"></i>A105 - Unnamed</li>
                            <li class="leaf"><i class="stub"></i>A106 - Unnamed</li>
                            <li class="leaf"><i class="stub"></i>A107 - Unnamed</li>
                            <li class="leaf"><i class="stub"></i>A108 - Unnamed</li>
                        </ul>
                    </li>
                    <li><div class="node"><button class="exp" aria-label="Expand"></button><i class="stub"></i><svg class="i16"><use href="#t-family"/></svg><span class="label">Families</span></div></li>
                    <li><div class="node"><button class="exp" aria-label="Expand"></button><i class="stub"></i><svg class="i16"><use href="#t-groups"/></svg><span class="label">Groups</span></div></li>
                    <li><div class="node plain"><i class="stub"></i><svg class="i16"><use href="#t-link"/></svg><span class="label">Revit Links</span></div></li>
                </ul>
                <div class="vscroll">
                    <svg class="i10"><use href="#c-up"/></svg>
                    <div class="track"><div class="thumb-v most"></div></div>
                    <svg class="i10"><use href="#c-down"/></svg>
                </div>
            </div>
        </aside>
    </main>

    <footer class="statusbar">
        <span class="hint">Click to select, TAB for alternates, CTRL adds, SHIFT unselects.</span>
        <span class="sep"></span>
        <svg class="i16"><use href="#k-workset"/></svg>
        <div class="combo"><select aria-label="Active workset"><option></option></select><svg class="i10"><use href="#c-thin"/></svg></div>
        <span class="count"><svg class="i16"><use href="#k-request"/></svg>:0</span>
        <button class="tool" aria-label="Design options"><svg class="i16"><use href="#k-list"/></svg></button>
        <button class="tool" aria-label="Exclude options"><svg class="i16"><use href="#k-option"/></svg></button>
        <div class="combo"><select aria-label="Design option" disabled><option>Main Model</option></select><svg class="i10"><use href="#c-thin"/></svg></div>
        <div class="select-toggles">
            <button class="tool" aria-label="Select links"><svg class="i16"><use href="#k-sellink"/></svg></button>
            <button class="tool" aria-label="Select underlay"><svg class="i16"><use href="#k-selunder"/></svg></button>
            <button class="tool" aria-label="Select pinned"><svg class="i16"><use href="#k-selpin"/></svg></button>
            <button class="tool" aria-label="Select by face"><svg class="i16"><use href="#k-selface"/></svg></button>
            <button class="tool" aria-label="Drag on selection"><svg class="i16"><use href="#k-drag"/></svg></button>
            <button class="tool" aria-label="Background processes"><svg class="i16"><use href="#k-ring"/></svg></button>
            <button class="tool filter"><svg class="i16"><use href="#k-filter"/></svg>:0</button>
        </div>
    </footer>

    <div class="taskbar">
        <div class="apps">
            <button aria-label="Start"><svg class="i16"><use href="#w-start"/></svg></button>
            <button aria-label="Task view"><svg class="i16"><use href="#w-task"/></svg></button>
            <button class="open" aria-label="File Explorer"><svg class="i24"><use href="#w-folder"/></svg></button>
            <button aria-label="Snipping Tool"><svg class="i24"><use href="#w-snip"/></svg></button>
            <button aria-label="Calculator"><svg class="i24"><use href="#w-calc"/></svg></button>
            <button><span class="ps">Ps</span></button>
            <button class="open" aria-label="Chrome"><svg class="i24"><use href="#w-chrome"/></svg></button>
            <button class="open" aria-label="Revit"><svg class="i24"><use href="#w-revit"/></svg></button>
            <button class="open" aria-label="AutoCAD"><svg class="i24"><use href="#w-acad"/></svg></button>
        </div>
        <div class="tray">
            <button class="weather"><svg class="i24"><use href="#w-weather"/></svg><span>26°C</span><span lang="ar" dir="rtl">غائم غالبًا</span></button>
            <button aria-label="Hidden icons"><svg class="i16"><use href="#w-up"/></svg></button>
            <button aria-label="Updater"><svg class="i16"><use href="#w-app"/></svg></button>
            <button aria-label="Autodesk"><svg class="i16"><use href="#w-adsk"/></svg></button>
            <button aria-label="Bluetooth"><svg class="i16"><use href="#w-bt"/></svg></button>
            <button aria-label="OneDrive"><svg class="i16"><use href="#w-cloud"/></svg></button>
            <button aria-label="Security"><svg class="i16"><use href="#w-shield"/></svg></button>
            <button aria-label="Battery"><svg class="i16"><use href="#w-batt"/></svg></button>
            <button aria-label="Volume"><svg class="i16"><use href="#w-sound"/></svg></button>
            <button aria-label="Network"><svg class="i16"><use href="#w-wifi"/></svg></button>
            <button class="lang" lang="ar">ع</button>
            <button class="clock"><span>2:22 AM</span><span>6/29/2022</span></button>
            <button class="notes" aria-label="Notifications"><svg class="i26"><use href="#w-note"/></svg><span class="badge">1</span></button>
            <span class="peek"></span>
        </div>
    </div>

    <div class="activate">
        <p class="big-line">Activate Windows</p>
        <p>Go to Settings to activate Windows.</p>
    </div>
    <div class="watermark">
        <span class="mark-ar" lang="ar" dir="rtl">مستقل</span>
        <span class="mark-en">mostaql.com</span>
    </div>
</body>
</html>
```
FILE: styles.css
```css
* {
    box-sizing: border-box;
}

body {
    font-family: "Noto Sans", "Open Sans", "DejaVu Sans", sans-serif;
    font-size: 11px;
    line-height: 16px;
    color: #111;
    background: #cacaca;
    display: flex;
    flex-direction: column;
    height: 100vh;
    margin: 0;
    overflow: hidden;
}

h1, h2, p, ul {
    margin: 0;
    padding: 0;
    font-size: inherit;
    font-weight: normal;
}

ul {
    list-style: none;
}

button, input, select {
    font: inherit;
    color: inherit;
    margin: 0;
    padding: 0;
    border: 0;
    border-radius: 0;
    background: none;
}

svg {
    display: block;
    flex: none;
    overflow: visible;
}

.sprite {
    position: absolute;
    width: 0;
    height: 0;
}

.i8 { width: 12px; height: 8px; }
.i10 { width: 10px; height: 10px; }
.i12 { width: 12px; height: 12px; }
.i16 { width: 16px; height: 16px; }
.i24 { width: 24px; height: 24px; }
.i26 { width: 26px; height: 26px; }
.i32 { width: 32px; height: 32px; }

.tool {
    display: flex;
    align-items: center;
    flex: none;
}

.split {
    justify-content: space-between;
    width: 28px;
}

.pressed {
    background: linear-gradient(#bfdcf5, #abd0f2);
    outline: 1px solid #1767b3;
    outline-offset: -1px;
}

.caret {
    flex: none;
    width: 0;
    height: 0;
    border: 3px solid transparent;
    border-top-color: #444;
    border-bottom: 0;
}

.caret.wide {
    border-width: 4px 4px 0;
}

.caret.side {
    border: 4px solid transparent;
    border-left-color: #444;
    border-right: 0;
}

.caret.up {
    border-top: 0;
    border-bottom: 3px solid #444;
}

.caret.dim {
    border-top-color: #999;
}

.sep {
    flex: none;
    width: 1px;
    height: 20px;
    background: #aaa;
}

/* title bar */
.titlebar {
    display: flex;
    align-items: center;
    flex: none;
    height: 25px;
    padding-right: 5px;
}

.quick-access {
    display: flex;
    align-items: center;
    gap: 8px;
    padding-left: 5px;
}

.quick-access .logo {
    margin-right: 4px;
}

.quick-access .sep {
    margin: 0 -1px;
}

.quick-access .pressed {
    margin: 0 -4px;
    padding: 3px 4px;
}

.app-title {
    flex: 1;
    text-align: center;
    white-space: nowrap;
    color: #333;
    line-height: 18px;
    padding-bottom: 4px;
    font-family: "Open Sans", sans-serif;
    font-size: 12px;
}

.info-center {
    display: flex;
    align-items: center;
    gap: 8px;
}

.search {
    width: 180px;
    height: 22px;
    padding: 0 2px;
    border: 1px solid #000;
    background: #fff;
}

.search::placeholder {
    color: #666;
    font-style: italic;
}

.search + .tool {
    margin-left: -4px;
}

.sign-in {
    gap: 5px;
    width: 114px;
    color: #223;
}

.sign-in .caret {
    margin-left: auto;
}

.help span {
    width: 16px;
    height: 16px;
    border: 1px solid #333;
    border-radius: 50%;
    background: #fff;
    color: #1c62b5;
    font-weight: bold;
    line-height: 14px;
}

.window-buttons {
    display: flex;
    gap: 13px;
    margin-left: 22px;
}

/* ribbon tabs */
.ribbon-tabs {
    display: flex;
    align-items: stretch;
    flex: none;
    height: 24px;
    padding-top: 4px;
}

.ribbon-tabs button {
    flex: none;
    white-space: nowrap;
    color: #222;
    font-family: "Open Sans", sans-serif;
    font-size: 12px;
}

.ribbon-tabs .file {
    width: 45px;
    margin-right: 2px;
    background: #2b7ab8;
    color: #fff;
}

.w-45 { width: 45px; }
.w-49 { width: 49px; }
.w-61 { width: 61px; }
.w-63 { width: 63px; }
.w-68 { width: 68px; }
.w-69 { width: 69px; }
.w-81 { width: 81px; }
.w-85 { width: 85px; }
.w-99 { width: 99px; }

.ribbon-tabs .active {
    width: 56px;
    background: #eee;
}

.ribbon-tabs .collapse {
    display: flex;
    align-items: center;
    gap: 4px;
    margin-left: 22px;
}

.pill {
    display: flex;
    align-items: center;
    justify-content: center;
    width: 15px;
    height: 9px;
    border: 1px solid #444;
    border-radius: 3px;
    background: #eee;
}

/* ribbon */
.ribbon {
    display: flex;
    flex: none;
    height: 96px;
    padding-top: 1px;
    background: #eee;
    border-bottom: 1px solid #c8c8c8;
}

.panel {
    display: flex;
    flex-direction: column;
    flex: none;
    border-right: 1px solid #d2d2d2;
}

.panel-body {
    flex: 1;
    padding-top: 3px;
}

.panel-name {
    display: flex;
    align-items: center;
    justify-content: center;
    gap: 5px;
    height: 20px;
    color: #333;
}

.p-select { width: 57px; }
.p-props { width: 64px; }
.p-clip { width: 80px; }
.p-geo { width: 139px; }
.p-modify { width: 238px; }
.p-view { width: 65px; }
.p-measure { width: 56px; }
.p-create { width: 84px; border-right: 0; }

.big {
    display: flex;
    flex-direction: column;
    align-items: center;
    height: 71px;
    font-family: "Open Sans", sans-serif;
    font-size: 12px;
    color: #333;
}

.p-select .big {
    width: 44px;
    margin: -1px auto 0 7px;
    padding-top: 6px;
    gap: 8px;
}

.cursor {
    width: 16px;
    height: 24px;
}

.stack {
    display: flex;
    flex-direction: column;
    align-items: center;
    gap: 2px;
}

.props-on {
    padding: 1px 3px;
}

.clip {
    display: flex;
    justify-content: space-between;
    padding-left: 11px;
    padding-right: 6px;
}

.clip .big {
    gap: 4px;
    padding-top: 1px;
}

.smalls {
    display: grid;
    grid-template-columns: 16px;
    grid-auto-rows: 16px;
    gap: 8px 9px;
    align-content: start;
    padding-top: 3px;
}

.smalls.three {
    grid-template-columns: repeat(3, 16px);
}

.smalls.view {
    grid-template-columns: 28px 16px;
    gap: 8px 7px;
    padding: 6px 7px 0;
}

.geo {
    display: grid;
    grid-template-columns: 62px 16px 28px;
    grid-auto-rows: 16px;
    gap: 8px 9px;
    padding: 6px 0 0 7px;
}

.named {
    gap: 5px;
    font-family: "Open Sans", sans-serif;
    font-size: 12px;
    color: #333;
}

.modify {
    display: flex;
    gap: 10px;
    padding-left: 6px;
}

.bigs {
    display: grid;
    grid-template-columns: repeat(4, 32px);
    grid-auto-rows: 32px;
    gap: 5px 7px;
}

.bigs.two {
    grid-template-columns: repeat(2, 32px);
    padding-left: 6px;
}

.p-measure .split {
    width: 44px;
}

.p-measure .stack {
    gap: 4px;
}

.options-bar {
    flex: none;
    height: 28px;
    background: #eee;
    border-bottom: 2px solid #c8c8c8;
}

/* workspace */
.workspace {
    display: flex;
    flex: 1;
    min-height: 0;
    background: #eee;
}

.palette-title {
    display: flex;
    align-items: center;
    justify-content: space-between;
    flex: none;
    height: 20px;
    padding: 2px 3px 0;
    color: #333;
}

.properties {
    display: flex;
    flex-direction: column;
    flex: none;
    width: 219px;
}

.properties .palette-title {
    padding-right: 4px;
}

.type-selector {
    display: flex;
    align-items: center;
    flex: none;
    height: 72px;
    margin: 0 2px 0 1px;
    padding: 2px 1px;
    border: 1px solid #ccc;
    color: #333;
}

.type-selector .caret {
    margin-left: auto;
}

.thumb {
    display: flex;
    align-items: center;
    justify-content: center;
    width: 67px;
    height: 66px;
    margin-right: 4px;
    border: 1px solid #ccc;
}

.instance-row {
    display: flex;
    align-items: center;
    flex: none;
    gap: 6px;
    height: 24px;
    padding-left: 1px;
}

.combo {
    display: grid;
    align-items: center;
    flex: none;
    width: 204px;
    height: 20px;
    background: #fff;
}

.combo select, .combo svg {
    grid-area: 1 / 1;
}

.combo select {
    appearance: none;
    width: 100%;
    height: 100%;
    padding: 0 3px;
    opacity: 1;
}

.combo select:disabled {
    color: #8a8a8a;
}

.combo svg {
    justify-self: end;
    margin-right: 3px;
    pointer-events: none;
}

.combo.instance {
    width: 134px;
    height: 22px;
    border: 1px solid #aaa;
    background: #dfdfdf;
}

.edit-type {
    gap: 5px;
}

.grid-wrap, .tree-wrap {
    display: flex;
    flex: 1;
    min-height: 0;
}

.grid-clip {
    flex: 1;
    overflow: hidden;
    margin-left: 1px;
}

.props {
    width: 100%;
    border-collapse: collapse;
    table-layout: fixed;
    background: #fff;
}

.c-name {
    width: 94px;
}

.c-assoc {
    width: 12px;
}

.props tr {
    height: 18px;
}

.props th, .props td {
    height: 18px;
    padding: 0;
    border: 1px dotted #777;
    border-left: 0;
    text-align: left;
    vertical-align: top;
    font-weight: normal;
    line-height: 15px;
    white-space: nowrap;
    overflow: hidden;
}

.props th {
    padding-left: 8px;
}

.props td {
    padding-left: 2px;
}

.props td:last-child {
    padding: 0;
}

.props .group th {
    padding: 0 4px 0 2px;
    background: #dcdcdc;
    border-right: 0;
    line-height: 17px;
}

.group span {
    display: flex;
    align-items: center;
    justify-content: space-between;
}

.props .off {
    color: #808080;
}

.props .scale {
    display: block;
    width: 92px;
    height: 17px;
    margin-left: -2px;
    padding-left: 5px;
    border: 1px solid #000;
}

.edit {
    display: block;
    width: 91px;
    height: 16px;
    margin: 1px 0 0 -1px;
    line-height: 13px;
    background: #dfdfdf;
    border: 1px solid #b5b5b5;
    border-right-width: 2px;
    border-bottom-width: 2px;
}

.props input[type="checkbox"] {
    appearance: none;
    display: block;
    width: 13px;
    height: 13px;
    margin: 3px 0 0 1px;
    border: 1px solid #222;
    background: #fff;
}

.props input[type="checkbox"]:disabled {
    border-color: #bbb;
}

.vscroll {
    display: flex;
    flex-direction: column;
    align-items: center;
    flex: none;
    width: 15px;
    padding: 4px 0;
    gap: 4px;
    background: #f0f0f0;
}

.properties .vscroll {
    margin: 0 3px 0 1px;
}

.track {
    display: flex;
    flex: 1;
    width: 100%;
}

.vscroll .track {
    flex-direction: column;
}

.thumb-v {
    width: 100%;
    height: 17px;
    background: #cbcbcb;
}

.thumb-v.long {
    height: 60%;
}

.thumb-v.most {
    height: 97%;
}

.vscroll .middle {
    justify-content: center;
}

.palette-foot {
    display: flex;
    align-items: center;
    justify-content: space-between;
    flex: none;
    height: 27px;
    padding: 0 4px 2px 3px;
}

.palette-foot a {
    color: #0f66c3;
}

.palette-foot button {
    width: 73px;
    height: 21px;
    background: #ccc;
    border: 1px solid #bfbfbf;
    color: #888;
    font-family: "Open Sans", sans-serif;
    font-size: 12px;
}

/* drawing area */
.view-area {
    display: flex;
    flex-direction: column;
    flex: 1;
    min-width: 0;
    background: #fff;
    border: solid #c8c8c8;
    border-width: 0 2px;
}

.view-tabs {
    display: flex;
    flex: none;
    height: 20px;
    background: #cacaca;
}

.view-tab {
    display: flex;
    align-items: center;
    gap: 7px;
    width: 128px;
    padding-top: 1px;
    padding-left: 5px;
    color: #333;
    white-space: nowrap;
}

.view-tab.active {
    background: #fff;
    font-weight: bold;
    padding-right: 4px;
}

.view-tab.active svg:last-child {
    margin-left: auto;
}

.view-tab.last {
    width: auto;
}

.tab-list {
    margin-left: auto;
    padding-right: 4px;
}

.viewport {
    display: flex;
    flex: 1;
    min-height: 0;
    padding-right: 3px;
}

.canvas {
    position: relative;
    flex: 1;
    min-width: 0;
    padding-left: 1px;
}

.model {
    width: 100%;
    height: 100%;
}

.viewcube {
    position: absolute;
    top: 46px;
    right: 14px;
    width: 98px;
    height: 46px;
}

.cube-face {
    font-size: 9px;
    font-weight: bold;
    fill: #8a8a8a;
}

.navbar {
    position: absolute;
    top: 121px;
    right: 2px;
    display: flex;
    flex-direction: column;
    align-items: center;
    gap: 4px;
    width: 35px;
    height: 117px;
    padding: 2px;
    border: 2px solid #c4c4c4;
    border-radius: 5px;
    background: #f2f2f2;
}

.nav-dot {
    width: 8px;
    height: 8px;
    align-self: flex-end;
}

.nav-dot.bottom {
    margin-top: auto;
}

.nav-icon {
    width: 26px;
    height: 26px;
}

.navbar hr {
    width: 100%;
    margin: 0;
    border: 0;
    border-top: 1px solid #bbb;
}

.view-bar {
    display: flex;
    align-items: center;
    gap: 5px;
    flex: none;
    height: 21px;
    padding-right: 3px;
    background: #f0f0f0;
    border-bottom: 2px solid #fff;
}

.scale-label {
    width: 76px;
    padding-left: 27px;
}

.hscroll {
    display: flex;
    align-items: center;
    flex: 1;
    padding-left: 1px;
}

.hscroll .track {
    justify-content: center;
}

.thumb-h {
    width: 17px;
    height: 15px;
    background: #cbcbcb;
}

.grip {
    width: 12px;
    height: 8px;
}

/* project browser */
.browser {
    display: flex;
    flex-direction: column;
    flex: none;
    width: 286px;
    padding-left: 2px;
    padding-bottom: 2px;
}

.browser .palette-title {
    padding: 2px 2px 0;
}

.tree {
    flex: 1;
    overflow: hidden;
    background: #fff;
}

.tree ul {
    padding-left: 20px;
}

.tree li {
    background: repeating-linear-gradient(#999 0 1px, transparent 1px 2px) 8px 0 / 1px 100% no-repeat;
}

.tree li:last-child {
    background-size: 1px 10px;
}

.tree > li:last-child {
    background-size: 1px 100%;
}

.node, .leaf {
    display: flex;
    align-items: center;
    height: 18px;
    white-space: nowrap;
}

.node {
    padding-left: 4px;
}

.exp {
    flex: none;
    width: 9px;
    height: 9px;
    margin-top: 1px;
    border: 1px solid #999;
    border-radius: 1px;
    background: linear-gradient(#27509b, #27509b) 1px 3px / 5px 1px no-repeat, linear-gradient(#27509b, #27509b) 3px 1px / 1px 5px no-repeat, #fff;
}

.exp.minus {
    background: linear-gradient(#27509b, #27509b) 1px 3px / 5px 1px no-repeat, #fff;
}

.stub {
    flex: none;
    width: 9px;
    height: 1px;
    margin-top: 1px;
    margin-right: 4px;
    background: repeating-linear-gradient(90deg, #999 0 1px, transparent 1px 2px);
}

.tree > li > .node .stub {
    width: 6px;
    margin-right: 1px;
}

.node.plain {
    padding-left: 8px;
}

.tree > li > .plain .stub {
    width: 11px;
}

.leaf {
    padding-left: 8px;
}

.leaf .stub {
    width: 15px;
    margin-right: 3px;
}

.label {
    margin-left: 3px;
    padding: 0 3px;
    line-height: 18px;
}

.label.selected {
    background: #e0e0e0;
}

/* status bar */
.statusbar {
    display: flex;
    align-items: center;
    flex: none;
    gap: 7px;
    height: 24px;
    padding-top: 1px;
    padding-right: 62px;
}

.hint {
    flex: none;
    width: 338px;
    padding-left: 1px;
    white-space: nowrap;
}

.count {
    display: flex;
    align-items: center;
    gap: 3px;
    width: 46px;
    margin: 0 1px 0 2px;
}

.statusbar > .tool + .tool {
    margin-left: 3px;
}

.select-toggles {
    display: flex;
    gap: 10px;
    margin-left: auto;
}

.filter {
    gap: 1px;
}

/* taskbar */
.taskbar {
    display: flex;
    justify-content: space-between;
    flex: none;
    height: 40px;
    color: #fff;
    background: linear-gradient(90deg, #423a32, #3b3631 20%, #303334 33%, #3a3533 45%, #2b2b2c 58%, #262b34 74%, #25282f 88%, #1d1d22);
}

.apps, .tray {
    display: flex;
    align-items: stretch;
}

.apps button {
    display: flex;
    align-items: center;
    justify-content: center;
    width: 49px;
    border: solid transparent;
    border-width: 2px 0;
}

.apps .open {
    width: 41px;
    margin: 0 4px;
    border-bottom-color: #76b9ed;
}

.ps {
    width: 22px;
    height: 22px;
    border: 2px solid #26b5f5;
    background: #0b1d2b;
    color: #26b5f5;
    font-size: 12px;
    font-weight: bold;
    line-height: 17px;
}

.tray {
    gap: 8px;
    font-family: "Open Sans", "DejaVu Sans", sans-serif;
    font-size: 12px;
}

.tray button {
    display: flex;
    align-items: center;
}

.weather {
    gap: 8px;
    margin-right: 7px;
    white-space: nowrap;
}

.tray .weather + button {
    margin-right: 1px;
}

.tray .lang {
    width: 24px;
    justify-content: center;
}

.tray .clock {
    flex-direction: column;
    justify-content: center;
    width: 62px;
    line-height: 18px;
    white-space: nowrap;
}

.tray .notes {
    display: grid;
    align-content: center;
    margin: 0 3px 0 4px;
}

.notes svg, .notes .badge {
    grid-area: 1 / 1;
}

.badge {
    padding: 9px 0 0 6px;
    font-size: 11px;
}

.peek {
    width: 5px;
    border-left: 1px solid #777;
}

/* overlays */
.activate {
    position: absolute;
    right: 56px;
    bottom: 73px;
    width: 237px;
    color: rgba(120, 120, 120, 0.6);
    font-family: "Open Sans", sans-serif;
    font-size: 14px;
    line-height: 20px;
    white-space: nowrap;
    pointer-events: none;
}

.activate .big-line {
    font-size: 19px;
    line-height: 24px;
}

.watermark {
    position: absolute;
    left: 601px;
    bottom: 14px;
    display: flex;
    flex-direction: column;
    width: 166px;
    text-align: center;
    color: rgba(160, 160, 160, 0.5);
    font-weight: bold;
    pointer-events: none;
}

.mark-ar {
    font-family: "DejaVu Sans", sans-serif;
    font-size: 54px;
    line-height: 56px;
    color: rgba(160, 166, 166, 0.4);
}

.mark-en {
    font-family: "Liberation Sans", Arial, sans-serif;
    font-size: 27px;
    line-height: 28px;
}
```
